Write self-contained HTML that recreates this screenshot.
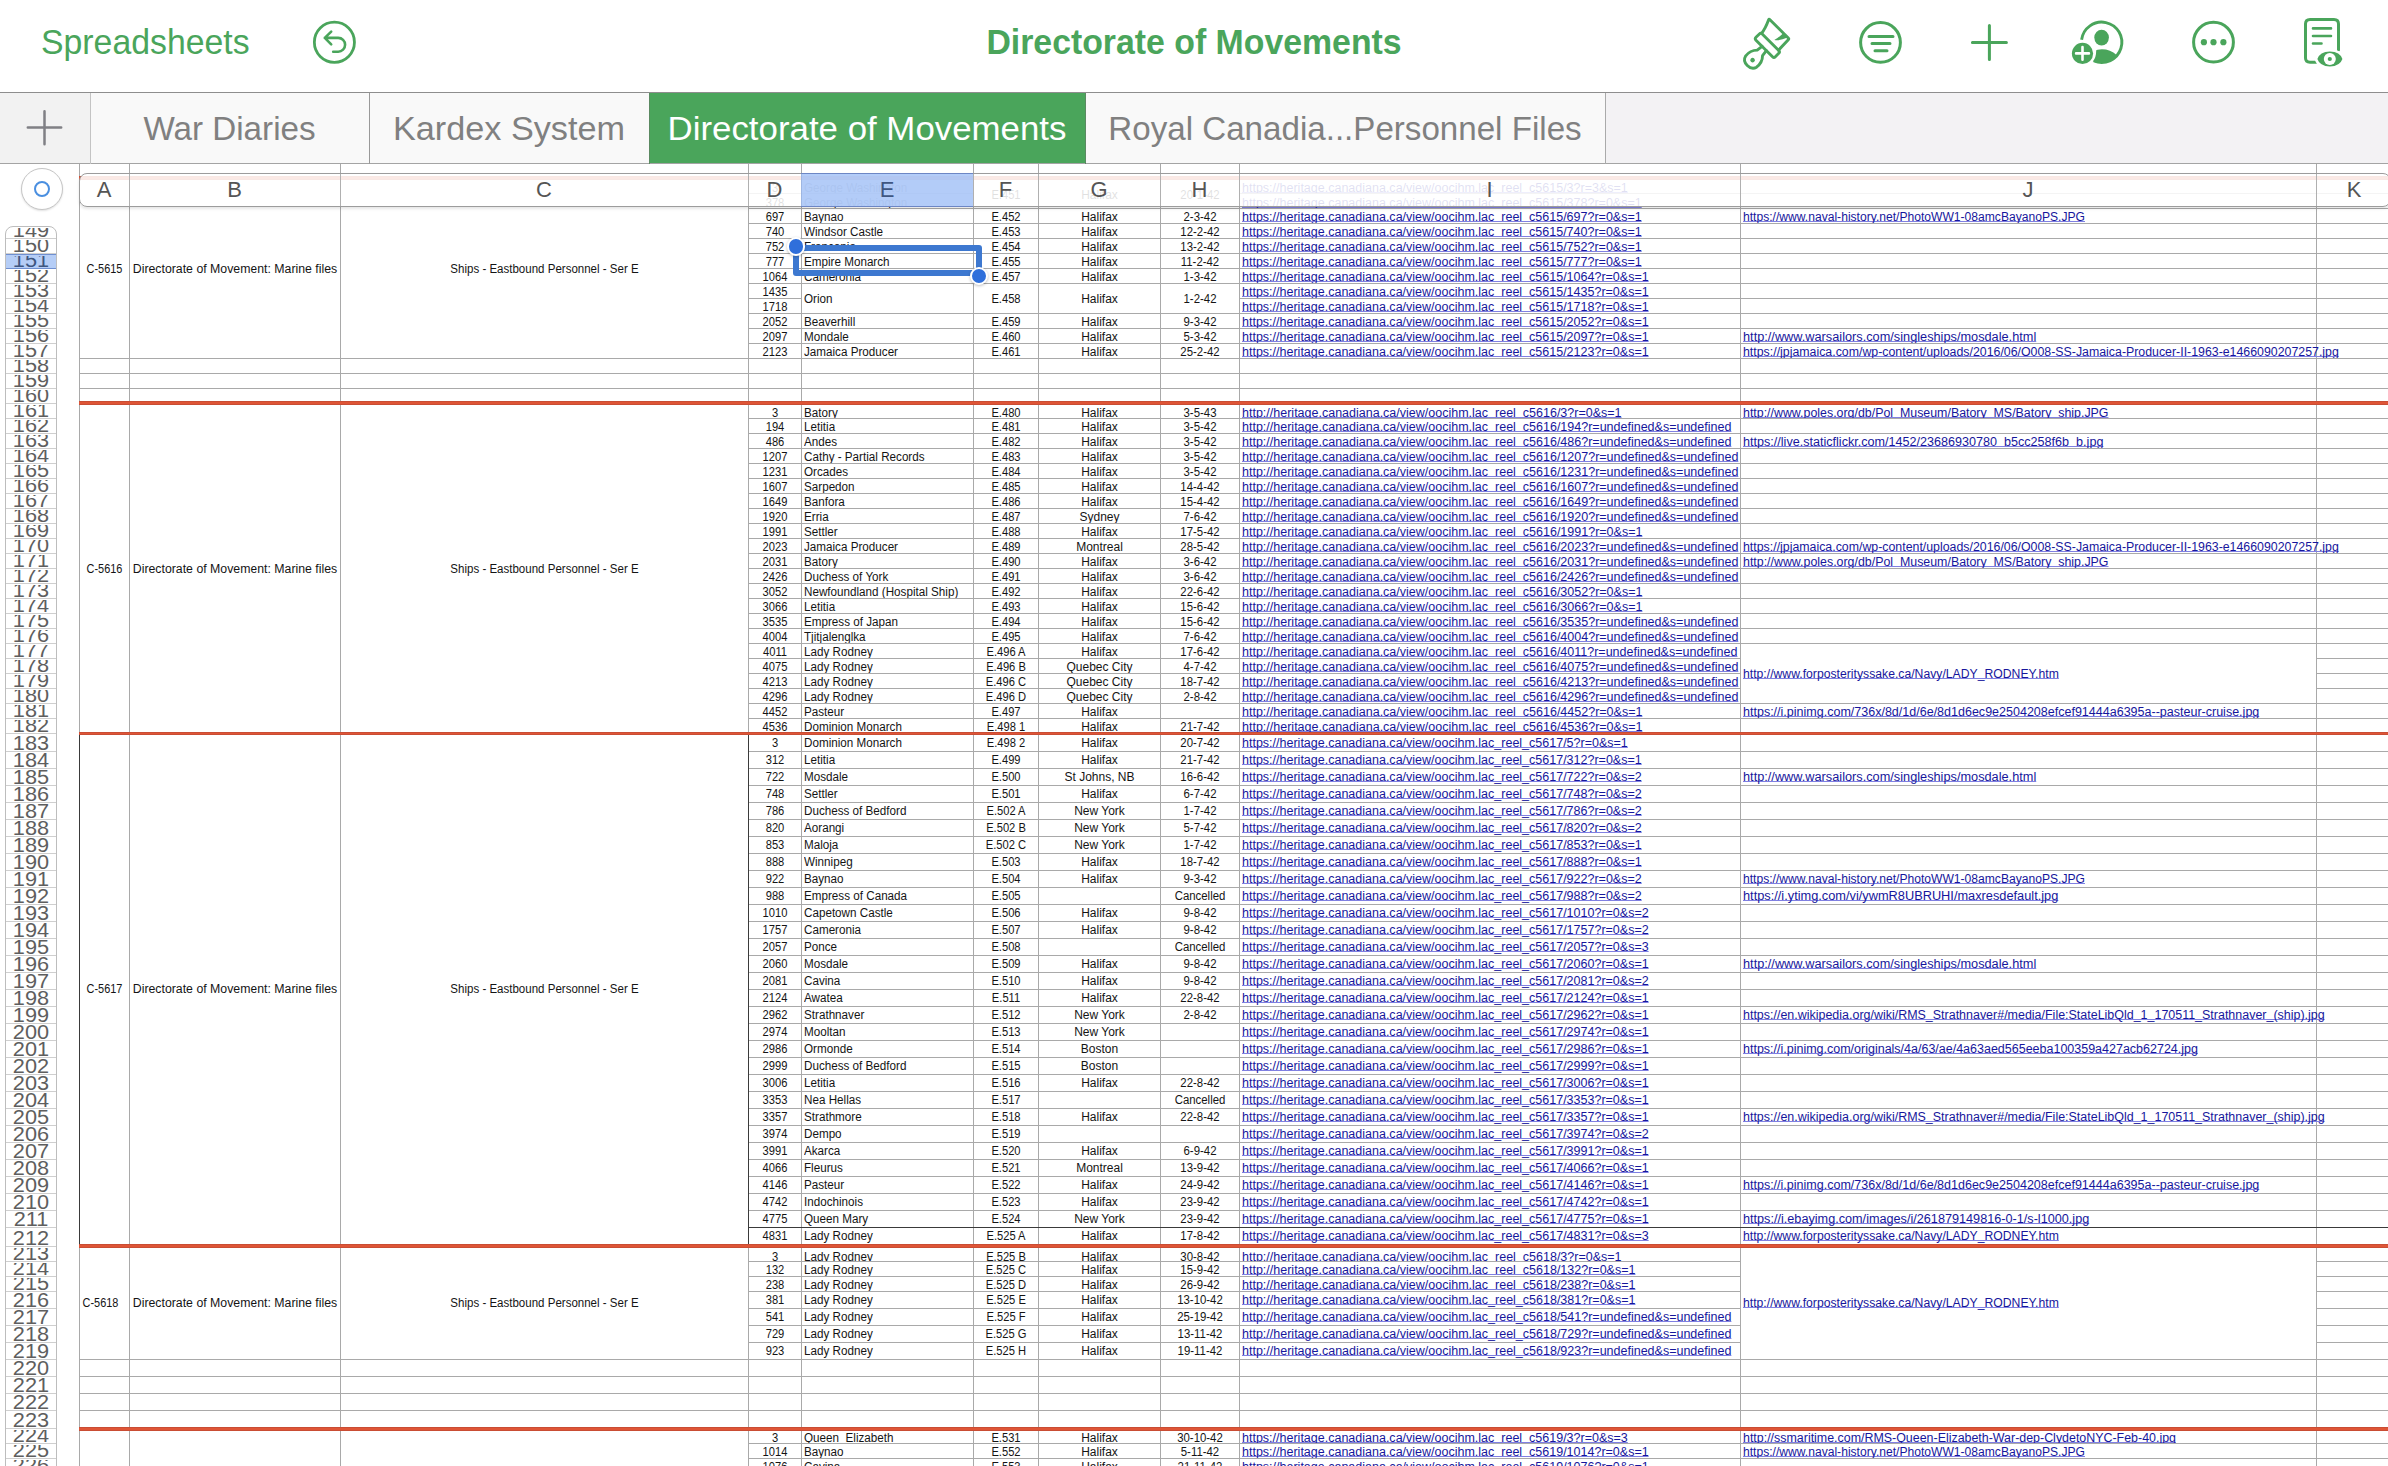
<!DOCTYPE html>
<html><head><meta charset="utf-8"><title>Directorate of Movements</title>
<style>
*{box-sizing:content-box}
html,body{margin:0;padding:0;background:#fff}
body{width:2388px;height:1466px;overflow:hidden;position:relative;font-family:"Liberation Sans",sans-serif}
#grid{position:absolute;left:0;top:0;width:2388px;height:1466px;overflow:hidden}
.c{position:absolute;border:1px solid #a9a9a9}
.tc{position:absolute;overflow:hidden}
.tl{position:absolute;white-space:pre;font-size:12px;line-height:14px;color:#141414;transform-origin:0 0}
.tcn{position:absolute;left:-50px;right:-50px;text-align:center;white-space:pre;font-size:12px;line-height:14px;color:#141414;transform-origin:50% 0}
.u{color:#16169c;text-decoration:underline;text-decoration-color:#8080e2;text-decoration-skip-ink:none;text-underline-offset:0px}
.red{position:absolute;left:79px;width:2400px;height:3.6px;background:#df5536;box-shadow:inset 0 1px 0 rgba(180,70,50,0.5),inset 0 -1px 0 rgba(180,70,50,0.5)}
#colhdr{position:absolute;left:79px;top:173px;width:2310px;height:32px;border:1px solid #9c9c9c;border-radius:8px;background:rgba(255,255,255,0.87);box-shadow:0 2px 3px rgba(0,0,0,0.10)}
.hdiv{position:absolute;top:174px;width:1px;height:32px;background:#b0b0b0}
#ehi{position:absolute;left:801px;top:173px;width:172px;height:32px;background:rgba(150,185,245,0.72);border-top:1px solid #6d86c4;border-bottom:1px solid #6d86c4}
.hl{position:absolute;top:177px;width:60px;text-align:center;font-size:22px;line-height:26px;color:#555}
#rowhdr{position:absolute;left:5px;top:226px;width:50px;height:1300px;border:1px solid #bdbdbd;border-radius:8px 8px 0 0;background:#fff;overflow:hidden}
.rh{position:absolute;left:0;width:50px;border-bottom:1px solid #cfcfcf;box-sizing:border-box;overflow:hidden}
.rc{position:absolute;left:0;right:0;top:1px;bottom:0;overflow:hidden}
.rh span{position:absolute;left:-10px;right:-10px;text-align:center;font-size:20.5px;line-height:24px;color:#5e5e5e;transform:scaleX(1.06)}
.rh.sel{background:#b5cdf6;border-top:1px solid #6f8fd0;border-bottom:1px solid #6f8fd0}
.rh.sel span{color:#3e5680}
#selall{position:absolute;left:21px;top:168px;width:40px;height:40px;border-radius:50%;background:#fff;border:1px solid #c6c6c6;box-shadow:0 1px 2px rgba(0,0,0,0.12)}
#selall div{position:absolute;left:11.8px;top:11.8px;width:12.6px;height:12.6px;border-radius:50%;border:2.6px solid #4a8fe0}
#toolbar{position:absolute;left:0;top:0;width:2388px;height:92px;background:#fff}
#sp{position:absolute;left:41px;top:22px;font-size:35px;line-height:40px;color:#4aa55b;transform:scaleX(0.966);transform-origin:0 0;white-space:pre}
#title{position:absolute;left:889px;width:610px;top:22px;text-align:center;font-size:35px;line-height:40px;font-weight:700;color:#4aa55b;transform:scaleX(0.966);white-space:pre}
#tabbar{position:absolute;left:0;top:92px;width:2388px;height:72px;background:#f3f2f4;border-top:1px solid #8e8e8e;border-bottom:1px solid #a4a4a4;box-sizing:border-box}
.tab{position:absolute;top:0;height:70px}
.tab span{position:absolute;left:-50px;right:-50px;top:17px;text-align:center;font-size:33px;line-height:38px;white-space:pre}
#selbox{position:absolute;left:793px;top:245px;width:177px;height:19px;border:6px solid #3d78d0;border-radius:3px}
.handle{position:absolute;width:14.2px;height:14.2px;border-radius:50%;background:#2f6fdb;border:2.5px solid #fff;box-shadow:0 1px 3px rgba(0,0,0,0.25)}
</style></head>
<body>
<div id="grid">
<div class="c" style="left:79px;top:178px;width:49px;height:179px"></div>
<div class="c" style="left:129px;top:178px;width:210px;height:179px"></div>
<div class="c" style="left:340px;top:178px;width:407px;height:179px"></div>
<div class="c" style="left:748px;top:178px;width:52px;height:14px"></div>
<div class="c" style="left:801px;top:178px;width:171px;height:14px"></div>
<div class="c" style="left:973px;top:178px;width:64px;height:29px"></div>
<div class="c" style="left:1038px;top:178px;width:121px;height:29px"></div>
<div class="c" style="left:1160px;top:178px;width:78px;height:29px"></div>
<div class="c" style="left:1239px;top:178px;width:500px;height:14px"></div>
<div class="c" style="left:1740px;top:178px;width:575px;height:14px"></div>
<div class="c" style="left:748px;top:193px;width:52px;height:14px"></div>
<div class="c" style="left:801px;top:193px;width:171px;height:14px"></div>
<div class="c" style="left:1239px;top:193px;width:500px;height:14px"></div>
<div class="c" style="left:1740px;top:193px;width:575px;height:14px"></div>
<div class="c" style="left:748px;top:208px;width:52px;height:14px"></div>
<div class="c" style="left:801px;top:208px;width:171px;height:14px"></div>
<div class="c" style="left:973px;top:208px;width:64px;height:14px"></div>
<div class="c" style="left:1038px;top:208px;width:121px;height:14px"></div>
<div class="c" style="left:1160px;top:208px;width:78px;height:14px"></div>
<div class="c" style="left:1239px;top:208px;width:500px;height:14px"></div>
<div class="c" style="left:1740px;top:208px;width:575px;height:14px"></div>
<div class="c" style="left:748px;top:223px;width:52px;height:14px"></div>
<div class="c" style="left:801px;top:223px;width:171px;height:14px"></div>
<div class="c" style="left:973px;top:223px;width:64px;height:14px"></div>
<div class="c" style="left:1038px;top:223px;width:121px;height:14px"></div>
<div class="c" style="left:1160px;top:223px;width:78px;height:14px"></div>
<div class="c" style="left:1239px;top:223px;width:500px;height:14px"></div>
<div class="c" style="left:1740px;top:223px;width:575px;height:14px"></div>
<div class="c" style="left:748px;top:238px;width:52px;height:14px"></div>
<div class="c" style="left:801px;top:238px;width:171px;height:14px"></div>
<div class="c" style="left:973px;top:238px;width:64px;height:14px"></div>
<div class="c" style="left:1038px;top:238px;width:121px;height:14px"></div>
<div class="c" style="left:1160px;top:238px;width:78px;height:14px"></div>
<div class="c" style="left:1239px;top:238px;width:500px;height:14px"></div>
<div class="c" style="left:1740px;top:238px;width:575px;height:14px"></div>
<div class="c" style="left:748px;top:253px;width:52px;height:14px"></div>
<div class="c" style="left:801px;top:253px;width:171px;height:14px"></div>
<div class="c" style="left:973px;top:253px;width:64px;height:14px"></div>
<div class="c" style="left:1038px;top:253px;width:121px;height:14px"></div>
<div class="c" style="left:1160px;top:253px;width:78px;height:14px"></div>
<div class="c" style="left:1239px;top:253px;width:500px;height:14px"></div>
<div class="c" style="left:1740px;top:253px;width:575px;height:14px"></div>
<div class="c" style="left:748px;top:268px;width:52px;height:14px"></div>
<div class="c" style="left:801px;top:268px;width:171px;height:14px"></div>
<div class="c" style="left:973px;top:268px;width:64px;height:14px"></div>
<div class="c" style="left:1038px;top:268px;width:121px;height:14px"></div>
<div class="c" style="left:1160px;top:268px;width:78px;height:14px"></div>
<div class="c" style="left:1239px;top:268px;width:500px;height:14px"></div>
<div class="c" style="left:1740px;top:268px;width:575px;height:14px"></div>
<div class="c" style="left:748px;top:313px;width:52px;height:14px"></div>
<div class="c" style="left:801px;top:313px;width:171px;height:14px"></div>
<div class="c" style="left:973px;top:313px;width:64px;height:14px"></div>
<div class="c" style="left:1038px;top:313px;width:121px;height:14px"></div>
<div class="c" style="left:1160px;top:313px;width:78px;height:14px"></div>
<div class="c" style="left:1239px;top:313px;width:500px;height:14px"></div>
<div class="c" style="left:1740px;top:313px;width:575px;height:14px"></div>
<div class="c" style="left:748px;top:328px;width:52px;height:14px"></div>
<div class="c" style="left:801px;top:328px;width:171px;height:14px"></div>
<div class="c" style="left:973px;top:328px;width:64px;height:14px"></div>
<div class="c" style="left:1038px;top:328px;width:121px;height:14px"></div>
<div class="c" style="left:1160px;top:328px;width:78px;height:14px"></div>
<div class="c" style="left:1239px;top:328px;width:500px;height:14px"></div>
<div class="c" style="left:1740px;top:328px;width:575px;height:14px"></div>
<div class="c" style="left:748px;top:343px;width:52px;height:14px"></div>
<div class="c" style="left:801px;top:343px;width:171px;height:14px"></div>
<div class="c" style="left:973px;top:343px;width:64px;height:14px"></div>
<div class="c" style="left:1038px;top:343px;width:121px;height:14px"></div>
<div class="c" style="left:1160px;top:343px;width:78px;height:14px"></div>
<div class="c" style="left:1239px;top:343px;width:500px;height:14px"></div>
<div class="c" style="left:1740px;top:343px;width:575px;height:14px"></div>
<div class="c" style="left:748px;top:283px;width:52px;height:14px"></div>
<div class="c" style="left:748px;top:298px;width:52px;height:14px"></div>
<div class="c" style="left:801px;top:283px;width:171px;height:29px"></div>
<div class="c" style="left:973px;top:283px;width:64px;height:29px"></div>
<div class="c" style="left:1038px;top:283px;width:121px;height:29px"></div>
<div class="c" style="left:1160px;top:283px;width:78px;height:29px"></div>
<div class="c" style="left:1239px;top:283px;width:500px;height:14px"></div>
<div class="c" style="left:1239px;top:298px;width:500px;height:14px"></div>
<div class="c" style="left:1740px;top:283px;width:575px;height:14px"></div>
<div class="c" style="left:1740px;top:298px;width:575px;height:14px"></div>
<div class="c" style="left:79px;top:403px;width:49px;height:329px"></div>
<div class="c" style="left:129px;top:403px;width:210px;height:329px"></div>
<div class="c" style="left:340px;top:403px;width:407px;height:329px"></div>
<div class="c" style="left:748px;top:403px;width:52px;height:14px"></div>
<div class="c" style="left:801px;top:403px;width:171px;height:14px"></div>
<div class="c" style="left:973px;top:403px;width:64px;height:14px"></div>
<div class="c" style="left:1038px;top:403px;width:121px;height:14px"></div>
<div class="c" style="left:1160px;top:403px;width:78px;height:14px"></div>
<div class="c" style="left:1239px;top:403px;width:500px;height:14px"></div>
<div class="c" style="left:1740px;top:403px;width:575px;height:14px"></div>
<div class="c" style="left:748px;top:418px;width:52px;height:14px"></div>
<div class="c" style="left:801px;top:418px;width:171px;height:14px"></div>
<div class="c" style="left:973px;top:418px;width:64px;height:14px"></div>
<div class="c" style="left:1038px;top:418px;width:121px;height:14px"></div>
<div class="c" style="left:1160px;top:418px;width:78px;height:14px"></div>
<div class="c" style="left:1239px;top:418px;width:500px;height:14px"></div>
<div class="c" style="left:1740px;top:418px;width:575px;height:14px"></div>
<div class="c" style="left:748px;top:433px;width:52px;height:14px"></div>
<div class="c" style="left:801px;top:433px;width:171px;height:14px"></div>
<div class="c" style="left:973px;top:433px;width:64px;height:14px"></div>
<div class="c" style="left:1038px;top:433px;width:121px;height:14px"></div>
<div class="c" style="left:1160px;top:433px;width:78px;height:14px"></div>
<div class="c" style="left:1239px;top:433px;width:500px;height:14px"></div>
<div class="c" style="left:1740px;top:433px;width:575px;height:14px"></div>
<div class="c" style="left:748px;top:448px;width:52px;height:14px"></div>
<div class="c" style="left:801px;top:448px;width:171px;height:14px"></div>
<div class="c" style="left:973px;top:448px;width:64px;height:14px"></div>
<div class="c" style="left:1038px;top:448px;width:121px;height:14px"></div>
<div class="c" style="left:1160px;top:448px;width:78px;height:14px"></div>
<div class="c" style="left:1239px;top:448px;width:500px;height:14px"></div>
<div class="c" style="left:1740px;top:448px;width:575px;height:14px"></div>
<div class="c" style="left:748px;top:463px;width:52px;height:14px"></div>
<div class="c" style="left:801px;top:463px;width:171px;height:14px"></div>
<div class="c" style="left:973px;top:463px;width:64px;height:14px"></div>
<div class="c" style="left:1038px;top:463px;width:121px;height:14px"></div>
<div class="c" style="left:1160px;top:463px;width:78px;height:14px"></div>
<div class="c" style="left:1239px;top:463px;width:500px;height:14px"></div>
<div class="c" style="left:1740px;top:463px;width:575px;height:14px"></div>
<div class="c" style="left:748px;top:478px;width:52px;height:14px"></div>
<div class="c" style="left:801px;top:478px;width:171px;height:14px"></div>
<div class="c" style="left:973px;top:478px;width:64px;height:14px"></div>
<div class="c" style="left:1038px;top:478px;width:121px;height:14px"></div>
<div class="c" style="left:1160px;top:478px;width:78px;height:14px"></div>
<div class="c" style="left:1239px;top:478px;width:500px;height:14px"></div>
<div class="c" style="left:1740px;top:478px;width:575px;height:14px"></div>
<div class="c" style="left:748px;top:493px;width:52px;height:14px"></div>
<div class="c" style="left:801px;top:493px;width:171px;height:14px"></div>
<div class="c" style="left:973px;top:493px;width:64px;height:14px"></div>
<div class="c" style="left:1038px;top:493px;width:121px;height:14px"></div>
<div class="c" style="left:1160px;top:493px;width:78px;height:14px"></div>
<div class="c" style="left:1239px;top:493px;width:500px;height:14px"></div>
<div class="c" style="left:1740px;top:493px;width:575px;height:14px"></div>
<div class="c" style="left:748px;top:508px;width:52px;height:14px"></div>
<div class="c" style="left:801px;top:508px;width:171px;height:14px"></div>
<div class="c" style="left:973px;top:508px;width:64px;height:14px"></div>
<div class="c" style="left:1038px;top:508px;width:121px;height:14px"></div>
<div class="c" style="left:1160px;top:508px;width:78px;height:14px"></div>
<div class="c" style="left:1239px;top:508px;width:500px;height:14px"></div>
<div class="c" style="left:1740px;top:508px;width:575px;height:14px"></div>
<div class="c" style="left:748px;top:523px;width:52px;height:14px"></div>
<div class="c" style="left:801px;top:523px;width:171px;height:14px"></div>
<div class="c" style="left:973px;top:523px;width:64px;height:14px"></div>
<div class="c" style="left:1038px;top:523px;width:121px;height:14px"></div>
<div class="c" style="left:1160px;top:523px;width:78px;height:14px"></div>
<div class="c" style="left:1239px;top:523px;width:500px;height:14px"></div>
<div class="c" style="left:1740px;top:523px;width:575px;height:14px"></div>
<div class="c" style="left:748px;top:538px;width:52px;height:14px"></div>
<div class="c" style="left:801px;top:538px;width:171px;height:14px"></div>
<div class="c" style="left:973px;top:538px;width:64px;height:14px"></div>
<div class="c" style="left:1038px;top:538px;width:121px;height:14px"></div>
<div class="c" style="left:1160px;top:538px;width:78px;height:14px"></div>
<div class="c" style="left:1239px;top:538px;width:500px;height:14px"></div>
<div class="c" style="left:1740px;top:538px;width:575px;height:14px"></div>
<div class="c" style="left:748px;top:553px;width:52px;height:14px"></div>
<div class="c" style="left:801px;top:553px;width:171px;height:14px"></div>
<div class="c" style="left:973px;top:553px;width:64px;height:14px"></div>
<div class="c" style="left:1038px;top:553px;width:121px;height:14px"></div>
<div class="c" style="left:1160px;top:553px;width:78px;height:14px"></div>
<div class="c" style="left:1239px;top:553px;width:500px;height:14px"></div>
<div class="c" style="left:1740px;top:553px;width:575px;height:14px"></div>
<div class="c" style="left:748px;top:568px;width:52px;height:14px"></div>
<div class="c" style="left:801px;top:568px;width:171px;height:14px"></div>
<div class="c" style="left:973px;top:568px;width:64px;height:14px"></div>
<div class="c" style="left:1038px;top:568px;width:121px;height:14px"></div>
<div class="c" style="left:1160px;top:568px;width:78px;height:14px"></div>
<div class="c" style="left:1239px;top:568px;width:500px;height:14px"></div>
<div class="c" style="left:1740px;top:568px;width:575px;height:14px"></div>
<div class="c" style="left:748px;top:583px;width:52px;height:14px"></div>
<div class="c" style="left:801px;top:583px;width:171px;height:14px"></div>
<div class="c" style="left:973px;top:583px;width:64px;height:14px"></div>
<div class="c" style="left:1038px;top:583px;width:121px;height:14px"></div>
<div class="c" style="left:1160px;top:583px;width:78px;height:14px"></div>
<div class="c" style="left:1239px;top:583px;width:500px;height:14px"></div>
<div class="c" style="left:1740px;top:583px;width:575px;height:14px"></div>
<div class="c" style="left:748px;top:598px;width:52px;height:14px"></div>
<div class="c" style="left:801px;top:598px;width:171px;height:14px"></div>
<div class="c" style="left:973px;top:598px;width:64px;height:14px"></div>
<div class="c" style="left:1038px;top:598px;width:121px;height:14px"></div>
<div class="c" style="left:1160px;top:598px;width:78px;height:14px"></div>
<div class="c" style="left:1239px;top:598px;width:500px;height:14px"></div>
<div class="c" style="left:1740px;top:598px;width:575px;height:14px"></div>
<div class="c" style="left:748px;top:613px;width:52px;height:14px"></div>
<div class="c" style="left:801px;top:613px;width:171px;height:14px"></div>
<div class="c" style="left:973px;top:613px;width:64px;height:14px"></div>
<div class="c" style="left:1038px;top:613px;width:121px;height:14px"></div>
<div class="c" style="left:1160px;top:613px;width:78px;height:14px"></div>
<div class="c" style="left:1239px;top:613px;width:500px;height:14px"></div>
<div class="c" style="left:1740px;top:613px;width:575px;height:14px"></div>
<div class="c" style="left:748px;top:628px;width:52px;height:14px"></div>
<div class="c" style="left:801px;top:628px;width:171px;height:14px"></div>
<div class="c" style="left:973px;top:628px;width:64px;height:14px"></div>
<div class="c" style="left:1038px;top:628px;width:121px;height:14px"></div>
<div class="c" style="left:1160px;top:628px;width:78px;height:14px"></div>
<div class="c" style="left:1239px;top:628px;width:500px;height:14px"></div>
<div class="c" style="left:1740px;top:628px;width:575px;height:14px"></div>
<div class="c" style="left:748px;top:643px;width:52px;height:14px"></div>
<div class="c" style="left:801px;top:643px;width:171px;height:14px"></div>
<div class="c" style="left:973px;top:643px;width:64px;height:14px"></div>
<div class="c" style="left:1038px;top:643px;width:121px;height:14px"></div>
<div class="c" style="left:1160px;top:643px;width:78px;height:14px"></div>
<div class="c" style="left:1239px;top:643px;width:500px;height:14px"></div>
<div class="c" style="left:748px;top:658px;width:52px;height:14px"></div>
<div class="c" style="left:801px;top:658px;width:171px;height:14px"></div>
<div class="c" style="left:973px;top:658px;width:64px;height:14px"></div>
<div class="c" style="left:1038px;top:658px;width:121px;height:14px"></div>
<div class="c" style="left:1160px;top:658px;width:78px;height:14px"></div>
<div class="c" style="left:1239px;top:658px;width:500px;height:14px"></div>
<div class="c" style="left:748px;top:673px;width:52px;height:14px"></div>
<div class="c" style="left:801px;top:673px;width:171px;height:14px"></div>
<div class="c" style="left:973px;top:673px;width:64px;height:14px"></div>
<div class="c" style="left:1038px;top:673px;width:121px;height:14px"></div>
<div class="c" style="left:1160px;top:673px;width:78px;height:14px"></div>
<div class="c" style="left:1239px;top:673px;width:500px;height:14px"></div>
<div class="c" style="left:748px;top:688px;width:52px;height:14px"></div>
<div class="c" style="left:801px;top:688px;width:171px;height:14px"></div>
<div class="c" style="left:973px;top:688px;width:64px;height:14px"></div>
<div class="c" style="left:1038px;top:688px;width:121px;height:14px"></div>
<div class="c" style="left:1160px;top:688px;width:78px;height:14px"></div>
<div class="c" style="left:1239px;top:688px;width:500px;height:14px"></div>
<div class="c" style="left:748px;top:703px;width:52px;height:14px"></div>
<div class="c" style="left:801px;top:703px;width:171px;height:14px"></div>
<div class="c" style="left:973px;top:703px;width:64px;height:14px"></div>
<div class="c" style="left:1038px;top:703px;width:121px;height:14px"></div>
<div class="c" style="left:1160px;top:703px;width:78px;height:14px"></div>
<div class="c" style="left:1239px;top:703px;width:500px;height:14px"></div>
<div class="c" style="left:1740px;top:703px;width:575px;height:14px"></div>
<div class="c" style="left:748px;top:718px;width:52px;height:14px"></div>
<div class="c" style="left:801px;top:718px;width:171px;height:14px"></div>
<div class="c" style="left:973px;top:718px;width:64px;height:14px"></div>
<div class="c" style="left:1038px;top:718px;width:121px;height:14px"></div>
<div class="c" style="left:1160px;top:718px;width:78px;height:14px"></div>
<div class="c" style="left:1239px;top:718px;width:500px;height:14px"></div>
<div class="c" style="left:1740px;top:718px;width:575px;height:14px"></div>
<div class="c" style="left:1740px;top:643px;width:575px;height:59px"></div>
<div class="c" style="left:79px;top:733px;width:49px;height:510px"></div>
<div class="c" style="left:129px;top:733px;width:210px;height:510px"></div>
<div class="c" style="left:340px;top:733px;width:407px;height:510px"></div>
<div class="c" style="left:748px;top:733px;width:52px;height:17px"></div>
<div class="c" style="left:801px;top:733px;width:171px;height:17px"></div>
<div class="c" style="left:973px;top:733px;width:64px;height:17px"></div>
<div class="c" style="left:1038px;top:733px;width:121px;height:17px"></div>
<div class="c" style="left:1160px;top:733px;width:78px;height:17px"></div>
<div class="c" style="left:1239px;top:733px;width:500px;height:17px"></div>
<div class="c" style="left:1740px;top:733px;width:575px;height:17px"></div>
<div class="c" style="left:748px;top:751px;width:52px;height:16px"></div>
<div class="c" style="left:801px;top:751px;width:171px;height:16px"></div>
<div class="c" style="left:973px;top:751px;width:64px;height:16px"></div>
<div class="c" style="left:1038px;top:751px;width:121px;height:16px"></div>
<div class="c" style="left:1160px;top:751px;width:78px;height:16px"></div>
<div class="c" style="left:1239px;top:751px;width:500px;height:16px"></div>
<div class="c" style="left:1740px;top:751px;width:575px;height:16px"></div>
<div class="c" style="left:748px;top:768px;width:52px;height:16px"></div>
<div class="c" style="left:801px;top:768px;width:171px;height:16px"></div>
<div class="c" style="left:973px;top:768px;width:64px;height:16px"></div>
<div class="c" style="left:1038px;top:768px;width:121px;height:16px"></div>
<div class="c" style="left:1160px;top:768px;width:78px;height:16px"></div>
<div class="c" style="left:1239px;top:768px;width:500px;height:16px"></div>
<div class="c" style="left:1740px;top:768px;width:575px;height:16px"></div>
<div class="c" style="left:748px;top:785px;width:52px;height:16px"></div>
<div class="c" style="left:801px;top:785px;width:171px;height:16px"></div>
<div class="c" style="left:973px;top:785px;width:64px;height:16px"></div>
<div class="c" style="left:1038px;top:785px;width:121px;height:16px"></div>
<div class="c" style="left:1160px;top:785px;width:78px;height:16px"></div>
<div class="c" style="left:1239px;top:785px;width:500px;height:16px"></div>
<div class="c" style="left:1740px;top:785px;width:575px;height:16px"></div>
<div class="c" style="left:748px;top:802px;width:52px;height:16px"></div>
<div class="c" style="left:801px;top:802px;width:171px;height:16px"></div>
<div class="c" style="left:973px;top:802px;width:64px;height:16px"></div>
<div class="c" style="left:1038px;top:802px;width:121px;height:16px"></div>
<div class="c" style="left:1160px;top:802px;width:78px;height:16px"></div>
<div class="c" style="left:1239px;top:802px;width:500px;height:16px"></div>
<div class="c" style="left:1740px;top:802px;width:575px;height:16px"></div>
<div class="c" style="left:748px;top:819px;width:52px;height:16px"></div>
<div class="c" style="left:801px;top:819px;width:171px;height:16px"></div>
<div class="c" style="left:973px;top:819px;width:64px;height:16px"></div>
<div class="c" style="left:1038px;top:819px;width:121px;height:16px"></div>
<div class="c" style="left:1160px;top:819px;width:78px;height:16px"></div>
<div class="c" style="left:1239px;top:819px;width:500px;height:16px"></div>
<div class="c" style="left:1740px;top:819px;width:575px;height:16px"></div>
<div class="c" style="left:748px;top:836px;width:52px;height:16px"></div>
<div class="c" style="left:801px;top:836px;width:171px;height:16px"></div>
<div class="c" style="left:973px;top:836px;width:64px;height:16px"></div>
<div class="c" style="left:1038px;top:836px;width:121px;height:16px"></div>
<div class="c" style="left:1160px;top:836px;width:78px;height:16px"></div>
<div class="c" style="left:1239px;top:836px;width:500px;height:16px"></div>
<div class="c" style="left:1740px;top:836px;width:575px;height:16px"></div>
<div class="c" style="left:748px;top:853px;width:52px;height:16px"></div>
<div class="c" style="left:801px;top:853px;width:171px;height:16px"></div>
<div class="c" style="left:973px;top:853px;width:64px;height:16px"></div>
<div class="c" style="left:1038px;top:853px;width:121px;height:16px"></div>
<div class="c" style="left:1160px;top:853px;width:78px;height:16px"></div>
<div class="c" style="left:1239px;top:853px;width:500px;height:16px"></div>
<div class="c" style="left:1740px;top:853px;width:575px;height:16px"></div>
<div class="c" style="left:748px;top:870px;width:52px;height:16px"></div>
<div class="c" style="left:801px;top:870px;width:171px;height:16px"></div>
<div class="c" style="left:973px;top:870px;width:64px;height:16px"></div>
<div class="c" style="left:1038px;top:870px;width:121px;height:16px"></div>
<div class="c" style="left:1160px;top:870px;width:78px;height:16px"></div>
<div class="c" style="left:1239px;top:870px;width:500px;height:16px"></div>
<div class="c" style="left:1740px;top:870px;width:575px;height:16px"></div>
<div class="c" style="left:748px;top:887px;width:52px;height:16px"></div>
<div class="c" style="left:801px;top:887px;width:171px;height:16px"></div>
<div class="c" style="left:973px;top:887px;width:64px;height:16px"></div>
<div class="c" style="left:1038px;top:887px;width:121px;height:16px"></div>
<div class="c" style="left:1160px;top:887px;width:78px;height:16px"></div>
<div class="c" style="left:1239px;top:887px;width:500px;height:16px"></div>
<div class="c" style="left:1740px;top:887px;width:575px;height:16px"></div>
<div class="c" style="left:748px;top:904px;width:52px;height:16px"></div>
<div class="c" style="left:801px;top:904px;width:171px;height:16px"></div>
<div class="c" style="left:973px;top:904px;width:64px;height:16px"></div>
<div class="c" style="left:1038px;top:904px;width:121px;height:16px"></div>
<div class="c" style="left:1160px;top:904px;width:78px;height:16px"></div>
<div class="c" style="left:1239px;top:904px;width:500px;height:16px"></div>
<div class="c" style="left:1740px;top:904px;width:575px;height:16px"></div>
<div class="c" style="left:748px;top:921px;width:52px;height:16px"></div>
<div class="c" style="left:801px;top:921px;width:171px;height:16px"></div>
<div class="c" style="left:973px;top:921px;width:64px;height:16px"></div>
<div class="c" style="left:1038px;top:921px;width:121px;height:16px"></div>
<div class="c" style="left:1160px;top:921px;width:78px;height:16px"></div>
<div class="c" style="left:1239px;top:921px;width:500px;height:16px"></div>
<div class="c" style="left:1740px;top:921px;width:575px;height:16px"></div>
<div class="c" style="left:748px;top:938px;width:52px;height:16px"></div>
<div class="c" style="left:801px;top:938px;width:171px;height:16px"></div>
<div class="c" style="left:973px;top:938px;width:64px;height:16px"></div>
<div class="c" style="left:1038px;top:938px;width:121px;height:16px"></div>
<div class="c" style="left:1160px;top:938px;width:78px;height:16px"></div>
<div class="c" style="left:1239px;top:938px;width:500px;height:16px"></div>
<div class="c" style="left:1740px;top:938px;width:575px;height:16px"></div>
<div class="c" style="left:748px;top:955px;width:52px;height:16px"></div>
<div class="c" style="left:801px;top:955px;width:171px;height:16px"></div>
<div class="c" style="left:973px;top:955px;width:64px;height:16px"></div>
<div class="c" style="left:1038px;top:955px;width:121px;height:16px"></div>
<div class="c" style="left:1160px;top:955px;width:78px;height:16px"></div>
<div class="c" style="left:1239px;top:955px;width:500px;height:16px"></div>
<div class="c" style="left:1740px;top:955px;width:575px;height:16px"></div>
<div class="c" style="left:748px;top:972px;width:52px;height:16px"></div>
<div class="c" style="left:801px;top:972px;width:171px;height:16px"></div>
<div class="c" style="left:973px;top:972px;width:64px;height:16px"></div>
<div class="c" style="left:1038px;top:972px;width:121px;height:16px"></div>
<div class="c" style="left:1160px;top:972px;width:78px;height:16px"></div>
<div class="c" style="left:1239px;top:972px;width:500px;height:16px"></div>
<div class="c" style="left:1740px;top:972px;width:575px;height:16px"></div>
<div class="c" style="left:748px;top:989px;width:52px;height:16px"></div>
<div class="c" style="left:801px;top:989px;width:171px;height:16px"></div>
<div class="c" style="left:973px;top:989px;width:64px;height:16px"></div>
<div class="c" style="left:1038px;top:989px;width:121px;height:16px"></div>
<div class="c" style="left:1160px;top:989px;width:78px;height:16px"></div>
<div class="c" style="left:1239px;top:989px;width:500px;height:16px"></div>
<div class="c" style="left:1740px;top:989px;width:575px;height:16px"></div>
<div class="c" style="left:748px;top:1006px;width:52px;height:16px"></div>
<div class="c" style="left:801px;top:1006px;width:171px;height:16px"></div>
<div class="c" style="left:973px;top:1006px;width:64px;height:16px"></div>
<div class="c" style="left:1038px;top:1006px;width:121px;height:16px"></div>
<div class="c" style="left:1160px;top:1006px;width:78px;height:16px"></div>
<div class="c" style="left:1239px;top:1006px;width:500px;height:16px"></div>
<div class="c" style="left:1740px;top:1006px;width:575px;height:16px"></div>
<div class="c" style="left:748px;top:1023px;width:52px;height:16px"></div>
<div class="c" style="left:801px;top:1023px;width:171px;height:16px"></div>
<div class="c" style="left:973px;top:1023px;width:64px;height:16px"></div>
<div class="c" style="left:1038px;top:1023px;width:121px;height:16px"></div>
<div class="c" style="left:1160px;top:1023px;width:78px;height:16px"></div>
<div class="c" style="left:1239px;top:1023px;width:500px;height:16px"></div>
<div class="c" style="left:1740px;top:1023px;width:575px;height:16px"></div>
<div class="c" style="left:748px;top:1040px;width:52px;height:16px"></div>
<div class="c" style="left:801px;top:1040px;width:171px;height:16px"></div>
<div class="c" style="left:973px;top:1040px;width:64px;height:16px"></div>
<div class="c" style="left:1038px;top:1040px;width:121px;height:16px"></div>
<div class="c" style="left:1160px;top:1040px;width:78px;height:16px"></div>
<div class="c" style="left:1239px;top:1040px;width:500px;height:16px"></div>
<div class="c" style="left:1740px;top:1040px;width:575px;height:16px"></div>
<div class="c" style="left:748px;top:1057px;width:52px;height:16px"></div>
<div class="c" style="left:801px;top:1057px;width:171px;height:16px"></div>
<div class="c" style="left:973px;top:1057px;width:64px;height:16px"></div>
<div class="c" style="left:1038px;top:1057px;width:121px;height:16px"></div>
<div class="c" style="left:1160px;top:1057px;width:78px;height:16px"></div>
<div class="c" style="left:1239px;top:1057px;width:500px;height:16px"></div>
<div class="c" style="left:1740px;top:1057px;width:575px;height:16px"></div>
<div class="c" style="left:748px;top:1074px;width:52px;height:16px"></div>
<div class="c" style="left:801px;top:1074px;width:171px;height:16px"></div>
<div class="c" style="left:973px;top:1074px;width:64px;height:16px"></div>
<div class="c" style="left:1038px;top:1074px;width:121px;height:16px"></div>
<div class="c" style="left:1160px;top:1074px;width:78px;height:16px"></div>
<div class="c" style="left:1239px;top:1074px;width:500px;height:16px"></div>
<div class="c" style="left:1740px;top:1074px;width:575px;height:16px"></div>
<div class="c" style="left:748px;top:1091px;width:52px;height:16px"></div>
<div class="c" style="left:801px;top:1091px;width:171px;height:16px"></div>
<div class="c" style="left:973px;top:1091px;width:64px;height:16px"></div>
<div class="c" style="left:1038px;top:1091px;width:121px;height:16px"></div>
<div class="c" style="left:1160px;top:1091px;width:78px;height:16px"></div>
<div class="c" style="left:1239px;top:1091px;width:500px;height:16px"></div>
<div class="c" style="left:1740px;top:1091px;width:575px;height:16px"></div>
<div class="c" style="left:748px;top:1108px;width:52px;height:16px"></div>
<div class="c" style="left:801px;top:1108px;width:171px;height:16px"></div>
<div class="c" style="left:973px;top:1108px;width:64px;height:16px"></div>
<div class="c" style="left:1038px;top:1108px;width:121px;height:16px"></div>
<div class="c" style="left:1160px;top:1108px;width:78px;height:16px"></div>
<div class="c" style="left:1239px;top:1108px;width:500px;height:16px"></div>
<div class="c" style="left:1740px;top:1108px;width:575px;height:16px"></div>
<div class="c" style="left:748px;top:1125px;width:52px;height:16px"></div>
<div class="c" style="left:801px;top:1125px;width:171px;height:16px"></div>
<div class="c" style="left:973px;top:1125px;width:64px;height:16px"></div>
<div class="c" style="left:1038px;top:1125px;width:121px;height:16px"></div>
<div class="c" style="left:1160px;top:1125px;width:78px;height:16px"></div>
<div class="c" style="left:1239px;top:1125px;width:500px;height:16px"></div>
<div class="c" style="left:1740px;top:1125px;width:575px;height:16px"></div>
<div class="c" style="left:748px;top:1142px;width:52px;height:16px"></div>
<div class="c" style="left:801px;top:1142px;width:171px;height:16px"></div>
<div class="c" style="left:973px;top:1142px;width:64px;height:16px"></div>
<div class="c" style="left:1038px;top:1142px;width:121px;height:16px"></div>
<div class="c" style="left:1160px;top:1142px;width:78px;height:16px"></div>
<div class="c" style="left:1239px;top:1142px;width:500px;height:16px"></div>
<div class="c" style="left:1740px;top:1142px;width:575px;height:16px"></div>
<div class="c" style="left:748px;top:1159px;width:52px;height:16px"></div>
<div class="c" style="left:801px;top:1159px;width:171px;height:16px"></div>
<div class="c" style="left:973px;top:1159px;width:64px;height:16px"></div>
<div class="c" style="left:1038px;top:1159px;width:121px;height:16px"></div>
<div class="c" style="left:1160px;top:1159px;width:78px;height:16px"></div>
<div class="c" style="left:1239px;top:1159px;width:500px;height:16px"></div>
<div class="c" style="left:1740px;top:1159px;width:575px;height:16px"></div>
<div class="c" style="left:748px;top:1176px;width:52px;height:16px"></div>
<div class="c" style="left:801px;top:1176px;width:171px;height:16px"></div>
<div class="c" style="left:973px;top:1176px;width:64px;height:16px"></div>
<div class="c" style="left:1038px;top:1176px;width:121px;height:16px"></div>
<div class="c" style="left:1160px;top:1176px;width:78px;height:16px"></div>
<div class="c" style="left:1239px;top:1176px;width:500px;height:16px"></div>
<div class="c" style="left:1740px;top:1176px;width:575px;height:16px"></div>
<div class="c" style="left:748px;top:1193px;width:52px;height:16px"></div>
<div class="c" style="left:801px;top:1193px;width:171px;height:16px"></div>
<div class="c" style="left:973px;top:1193px;width:64px;height:16px"></div>
<div class="c" style="left:1038px;top:1193px;width:121px;height:16px"></div>
<div class="c" style="left:1160px;top:1193px;width:78px;height:16px"></div>
<div class="c" style="left:1239px;top:1193px;width:500px;height:16px"></div>
<div class="c" style="left:1740px;top:1193px;width:575px;height:16px"></div>
<div class="c" style="left:748px;top:1210px;width:52px;height:16px"></div>
<div class="c" style="left:801px;top:1210px;width:171px;height:16px"></div>
<div class="c" style="left:973px;top:1210px;width:64px;height:16px"></div>
<div class="c" style="left:1038px;top:1210px;width:121px;height:16px"></div>
<div class="c" style="left:1160px;top:1210px;width:78px;height:16px"></div>
<div class="c" style="left:1239px;top:1210px;width:500px;height:16px"></div>
<div class="c" style="left:1740px;top:1210px;width:575px;height:16px"></div>
<div class="c" style="left:748px;top:1227px;width:52px;height:16px"></div>
<div class="c" style="left:801px;top:1227px;width:171px;height:16px"></div>
<div class="c" style="left:973px;top:1227px;width:64px;height:16px"></div>
<div class="c" style="left:1038px;top:1227px;width:121px;height:16px"></div>
<div class="c" style="left:1160px;top:1227px;width:78px;height:16px"></div>
<div class="c" style="left:1239px;top:1227px;width:500px;height:16px"></div>
<div class="c" style="left:1740px;top:1227px;width:575px;height:16px"></div>
<div class="c" style="left:79px;top:1246px;width:49px;height:112px"></div>
<div class="c" style="left:129px;top:1246px;width:210px;height:112px"></div>
<div class="c" style="left:340px;top:1246px;width:407px;height:112px"></div>
<div class="c" style="left:748px;top:1246px;width:52px;height:14px"></div>
<div class="c" style="left:801px;top:1246px;width:171px;height:14px"></div>
<div class="c" style="left:973px;top:1246px;width:64px;height:14px"></div>
<div class="c" style="left:1038px;top:1246px;width:121px;height:14px"></div>
<div class="c" style="left:1160px;top:1246px;width:78px;height:14px"></div>
<div class="c" style="left:1239px;top:1246px;width:500px;height:14px"></div>
<div class="c" style="left:748px;top:1261px;width:52px;height:14px"></div>
<div class="c" style="left:801px;top:1261px;width:171px;height:14px"></div>
<div class="c" style="left:973px;top:1261px;width:64px;height:14px"></div>
<div class="c" style="left:1038px;top:1261px;width:121px;height:14px"></div>
<div class="c" style="left:1160px;top:1261px;width:78px;height:14px"></div>
<div class="c" style="left:1239px;top:1261px;width:500px;height:14px"></div>
<div class="c" style="left:748px;top:1276px;width:52px;height:14px"></div>
<div class="c" style="left:801px;top:1276px;width:171px;height:14px"></div>
<div class="c" style="left:973px;top:1276px;width:64px;height:14px"></div>
<div class="c" style="left:1038px;top:1276px;width:121px;height:14px"></div>
<div class="c" style="left:1160px;top:1276px;width:78px;height:14px"></div>
<div class="c" style="left:1239px;top:1276px;width:500px;height:14px"></div>
<div class="c" style="left:748px;top:1291px;width:52px;height:16px"></div>
<div class="c" style="left:801px;top:1291px;width:171px;height:16px"></div>
<div class="c" style="left:973px;top:1291px;width:64px;height:16px"></div>
<div class="c" style="left:1038px;top:1291px;width:121px;height:16px"></div>
<div class="c" style="left:1160px;top:1291px;width:78px;height:16px"></div>
<div class="c" style="left:1239px;top:1291px;width:500px;height:16px"></div>
<div class="c" style="left:748px;top:1308px;width:52px;height:16px"></div>
<div class="c" style="left:801px;top:1308px;width:171px;height:16px"></div>
<div class="c" style="left:973px;top:1308px;width:64px;height:16px"></div>
<div class="c" style="left:1038px;top:1308px;width:121px;height:16px"></div>
<div class="c" style="left:1160px;top:1308px;width:78px;height:16px"></div>
<div class="c" style="left:1239px;top:1308px;width:500px;height:16px"></div>
<div class="c" style="left:748px;top:1325px;width:52px;height:16px"></div>
<div class="c" style="left:801px;top:1325px;width:171px;height:16px"></div>
<div class="c" style="left:973px;top:1325px;width:64px;height:16px"></div>
<div class="c" style="left:1038px;top:1325px;width:121px;height:16px"></div>
<div class="c" style="left:1160px;top:1325px;width:78px;height:16px"></div>
<div class="c" style="left:1239px;top:1325px;width:500px;height:16px"></div>
<div class="c" style="left:748px;top:1342px;width:52px;height:16px"></div>
<div class="c" style="left:801px;top:1342px;width:171px;height:16px"></div>
<div class="c" style="left:973px;top:1342px;width:64px;height:16px"></div>
<div class="c" style="left:1038px;top:1342px;width:121px;height:16px"></div>
<div class="c" style="left:1160px;top:1342px;width:78px;height:16px"></div>
<div class="c" style="left:1239px;top:1342px;width:500px;height:16px"></div>
<div class="c" style="left:1740px;top:1246px;width:575px;height:112px"></div>
<div class="c" style="left:79px;top:1428px;width:49px;height:44px"></div>
<div class="c" style="left:129px;top:1428px;width:210px;height:44px"></div>
<div class="c" style="left:340px;top:1428px;width:407px;height:44px"></div>
<div class="c" style="left:748px;top:1428px;width:52px;height:14px"></div>
<div class="c" style="left:801px;top:1428px;width:171px;height:14px"></div>
<div class="c" style="left:973px;top:1428px;width:64px;height:14px"></div>
<div class="c" style="left:1038px;top:1428px;width:121px;height:14px"></div>
<div class="c" style="left:1160px;top:1428px;width:78px;height:14px"></div>
<div class="c" style="left:1239px;top:1428px;width:500px;height:14px"></div>
<div class="c" style="left:1740px;top:1428px;width:575px;height:14px"></div>
<div class="c" style="left:748px;top:1443px;width:52px;height:14px"></div>
<div class="c" style="left:801px;top:1443px;width:171px;height:14px"></div>
<div class="c" style="left:973px;top:1443px;width:64px;height:14px"></div>
<div class="c" style="left:1038px;top:1443px;width:121px;height:14px"></div>
<div class="c" style="left:1160px;top:1443px;width:78px;height:14px"></div>
<div class="c" style="left:1239px;top:1443px;width:500px;height:14px"></div>
<div class="c" style="left:1740px;top:1443px;width:575px;height:14px"></div>
<div class="c" style="left:748px;top:1458px;width:52px;height:14px"></div>
<div class="c" style="left:801px;top:1458px;width:171px;height:14px"></div>
<div class="c" style="left:973px;top:1458px;width:64px;height:14px"></div>
<div class="c" style="left:1038px;top:1458px;width:121px;height:14px"></div>
<div class="c" style="left:1160px;top:1458px;width:78px;height:14px"></div>
<div class="c" style="left:1239px;top:1458px;width:500px;height:14px"></div>
<div class="c" style="left:1740px;top:1458px;width:575px;height:14px"></div>
<div class="c" style="left:79px;top:163px;width:49px;height:14px"></div>
<div class="c" style="left:129px;top:163px;width:210px;height:14px"></div>
<div class="c" style="left:340px;top:163px;width:407px;height:14px"></div>
<div class="c" style="left:748px;top:163px;width:52px;height:14px"></div>
<div class="c" style="left:801px;top:163px;width:171px;height:14px"></div>
<div class="c" style="left:973px;top:163px;width:64px;height:14px"></div>
<div class="c" style="left:1038px;top:163px;width:121px;height:14px"></div>
<div class="c" style="left:1160px;top:163px;width:78px;height:14px"></div>
<div class="c" style="left:1239px;top:163px;width:500px;height:14px"></div>
<div class="c" style="left:1740px;top:163px;width:575px;height:14px"></div>
<div class="c" style="left:2316px;top:163px;width:283px;height:14px"></div>
<div class="c" style="left:2316px;top:178px;width:283px;height:14px"></div>
<div class="c" style="left:2316px;top:193px;width:283px;height:14px"></div>
<div class="c" style="left:2316px;top:208px;width:283px;height:14px"></div>
<div class="c" style="left:2316px;top:223px;width:283px;height:14px"></div>
<div class="c" style="left:2316px;top:238px;width:283px;height:14px"></div>
<div class="c" style="left:2316px;top:253px;width:283px;height:14px"></div>
<div class="c" style="left:2316px;top:268px;width:283px;height:14px"></div>
<div class="c" style="left:2316px;top:283px;width:283px;height:14px"></div>
<div class="c" style="left:2316px;top:298px;width:283px;height:14px"></div>
<div class="c" style="left:2316px;top:313px;width:283px;height:14px"></div>
<div class="c" style="left:2316px;top:328px;width:283px;height:14px"></div>
<div class="c" style="left:2316px;top:343px;width:283px;height:14px"></div>
<div class="c" style="left:79px;top:358px;width:49px;height:14px"></div>
<div class="c" style="left:129px;top:358px;width:210px;height:14px"></div>
<div class="c" style="left:340px;top:358px;width:407px;height:14px"></div>
<div class="c" style="left:748px;top:358px;width:52px;height:14px"></div>
<div class="c" style="left:801px;top:358px;width:171px;height:14px"></div>
<div class="c" style="left:973px;top:358px;width:64px;height:14px"></div>
<div class="c" style="left:1038px;top:358px;width:121px;height:14px"></div>
<div class="c" style="left:1160px;top:358px;width:78px;height:14px"></div>
<div class="c" style="left:1239px;top:358px;width:500px;height:14px"></div>
<div class="c" style="left:1740px;top:358px;width:575px;height:14px"></div>
<div class="c" style="left:2316px;top:358px;width:283px;height:14px"></div>
<div class="c" style="left:79px;top:373px;width:49px;height:14px"></div>
<div class="c" style="left:129px;top:373px;width:210px;height:14px"></div>
<div class="c" style="left:340px;top:373px;width:407px;height:14px"></div>
<div class="c" style="left:748px;top:373px;width:52px;height:14px"></div>
<div class="c" style="left:801px;top:373px;width:171px;height:14px"></div>
<div class="c" style="left:973px;top:373px;width:64px;height:14px"></div>
<div class="c" style="left:1038px;top:373px;width:121px;height:14px"></div>
<div class="c" style="left:1160px;top:373px;width:78px;height:14px"></div>
<div class="c" style="left:1239px;top:373px;width:500px;height:14px"></div>
<div class="c" style="left:1740px;top:373px;width:575px;height:14px"></div>
<div class="c" style="left:2316px;top:373px;width:283px;height:14px"></div>
<div class="c" style="left:79px;top:388px;width:49px;height:14px"></div>
<div class="c" style="left:129px;top:388px;width:210px;height:14px"></div>
<div class="c" style="left:340px;top:388px;width:407px;height:14px"></div>
<div class="c" style="left:748px;top:388px;width:52px;height:14px"></div>
<div class="c" style="left:801px;top:388px;width:171px;height:14px"></div>
<div class="c" style="left:973px;top:388px;width:64px;height:14px"></div>
<div class="c" style="left:1038px;top:388px;width:121px;height:14px"></div>
<div class="c" style="left:1160px;top:388px;width:78px;height:14px"></div>
<div class="c" style="left:1239px;top:388px;width:500px;height:14px"></div>
<div class="c" style="left:1740px;top:388px;width:575px;height:14px"></div>
<div class="c" style="left:2316px;top:388px;width:283px;height:14px"></div>
<div class="c" style="left:2316px;top:403px;width:283px;height:14px"></div>
<div class="c" style="left:2316px;top:418px;width:283px;height:14px"></div>
<div class="c" style="left:2316px;top:433px;width:283px;height:14px"></div>
<div class="c" style="left:2316px;top:448px;width:283px;height:14px"></div>
<div class="c" style="left:2316px;top:463px;width:283px;height:14px"></div>
<div class="c" style="left:2316px;top:478px;width:283px;height:14px"></div>
<div class="c" style="left:2316px;top:493px;width:283px;height:14px"></div>
<div class="c" style="left:2316px;top:508px;width:283px;height:14px"></div>
<div class="c" style="left:2316px;top:523px;width:283px;height:14px"></div>
<div class="c" style="left:2316px;top:538px;width:283px;height:14px"></div>
<div class="c" style="left:2316px;top:553px;width:283px;height:14px"></div>
<div class="c" style="left:2316px;top:568px;width:283px;height:14px"></div>
<div class="c" style="left:2316px;top:583px;width:283px;height:14px"></div>
<div class="c" style="left:2316px;top:598px;width:283px;height:14px"></div>
<div class="c" style="left:2316px;top:613px;width:283px;height:14px"></div>
<div class="c" style="left:2316px;top:628px;width:283px;height:14px"></div>
<div class="c" style="left:2316px;top:643px;width:283px;height:14px"></div>
<div class="c" style="left:2316px;top:658px;width:283px;height:14px"></div>
<div class="c" style="left:2316px;top:673px;width:283px;height:14px"></div>
<div class="c" style="left:2316px;top:688px;width:283px;height:14px"></div>
<div class="c" style="left:2316px;top:703px;width:283px;height:14px"></div>
<div class="c" style="left:2316px;top:718px;width:283px;height:14px"></div>
<div class="c" style="left:2316px;top:733px;width:283px;height:17px"></div>
<div class="c" style="left:2316px;top:751px;width:283px;height:16px"></div>
<div class="c" style="left:2316px;top:768px;width:283px;height:16px"></div>
<div class="c" style="left:2316px;top:785px;width:283px;height:16px"></div>
<div class="c" style="left:2316px;top:802px;width:283px;height:16px"></div>
<div class="c" style="left:2316px;top:819px;width:283px;height:16px"></div>
<div class="c" style="left:2316px;top:836px;width:283px;height:16px"></div>
<div class="c" style="left:2316px;top:853px;width:283px;height:16px"></div>
<div class="c" style="left:2316px;top:870px;width:283px;height:16px"></div>
<div class="c" style="left:2316px;top:887px;width:283px;height:16px"></div>
<div class="c" style="left:2316px;top:904px;width:283px;height:16px"></div>
<div class="c" style="left:2316px;top:921px;width:283px;height:16px"></div>
<div class="c" style="left:2316px;top:938px;width:283px;height:16px"></div>
<div class="c" style="left:2316px;top:955px;width:283px;height:16px"></div>
<div class="c" style="left:2316px;top:972px;width:283px;height:16px"></div>
<div class="c" style="left:2316px;top:989px;width:283px;height:16px"></div>
<div class="c" style="left:2316px;top:1006px;width:283px;height:16px"></div>
<div class="c" style="left:2316px;top:1023px;width:283px;height:16px"></div>
<div class="c" style="left:2316px;top:1040px;width:283px;height:16px"></div>
<div class="c" style="left:2316px;top:1057px;width:283px;height:16px"></div>
<div class="c" style="left:2316px;top:1074px;width:283px;height:16px"></div>
<div class="c" style="left:2316px;top:1091px;width:283px;height:16px"></div>
<div class="c" style="left:2316px;top:1108px;width:283px;height:16px"></div>
<div class="c" style="left:2316px;top:1125px;width:283px;height:16px"></div>
<div class="c" style="left:2316px;top:1142px;width:283px;height:16px"></div>
<div class="c" style="left:2316px;top:1159px;width:283px;height:16px"></div>
<div class="c" style="left:2316px;top:1176px;width:283px;height:16px"></div>
<div class="c" style="left:2316px;top:1193px;width:283px;height:16px"></div>
<div class="c" style="left:2316px;top:1210px;width:283px;height:16px"></div>
<div class="c" style="left:2316px;top:1227px;width:283px;height:16px"></div>
<div class="c" style="left:2316px;top:1246px;width:283px;height:14px"></div>
<div class="c" style="left:2316px;top:1261px;width:283px;height:14px"></div>
<div class="c" style="left:2316px;top:1276px;width:283px;height:14px"></div>
<div class="c" style="left:2316px;top:1291px;width:283px;height:16px"></div>
<div class="c" style="left:2316px;top:1308px;width:283px;height:16px"></div>
<div class="c" style="left:2316px;top:1325px;width:283px;height:16px"></div>
<div class="c" style="left:2316px;top:1342px;width:283px;height:16px"></div>
<div class="c" style="left:79px;top:1359px;width:49px;height:16px"></div>
<div class="c" style="left:129px;top:1359px;width:210px;height:16px"></div>
<div class="c" style="left:340px;top:1359px;width:407px;height:16px"></div>
<div class="c" style="left:748px;top:1359px;width:52px;height:16px"></div>
<div class="c" style="left:801px;top:1359px;width:171px;height:16px"></div>
<div class="c" style="left:973px;top:1359px;width:64px;height:16px"></div>
<div class="c" style="left:1038px;top:1359px;width:121px;height:16px"></div>
<div class="c" style="left:1160px;top:1359px;width:78px;height:16px"></div>
<div class="c" style="left:1239px;top:1359px;width:500px;height:16px"></div>
<div class="c" style="left:1740px;top:1359px;width:575px;height:16px"></div>
<div class="c" style="left:2316px;top:1359px;width:283px;height:16px"></div>
<div class="c" style="left:79px;top:1376px;width:49px;height:16px"></div>
<div class="c" style="left:129px;top:1376px;width:210px;height:16px"></div>
<div class="c" style="left:340px;top:1376px;width:407px;height:16px"></div>
<div class="c" style="left:748px;top:1376px;width:52px;height:16px"></div>
<div class="c" style="left:801px;top:1376px;width:171px;height:16px"></div>
<div class="c" style="left:973px;top:1376px;width:64px;height:16px"></div>
<div class="c" style="left:1038px;top:1376px;width:121px;height:16px"></div>
<div class="c" style="left:1160px;top:1376px;width:78px;height:16px"></div>
<div class="c" style="left:1239px;top:1376px;width:500px;height:16px"></div>
<div class="c" style="left:1740px;top:1376px;width:575px;height:16px"></div>
<div class="c" style="left:2316px;top:1376px;width:283px;height:16px"></div>
<div class="c" style="left:79px;top:1393px;width:49px;height:16px"></div>
<div class="c" style="left:129px;top:1393px;width:210px;height:16px"></div>
<div class="c" style="left:340px;top:1393px;width:407px;height:16px"></div>
<div class="c" style="left:748px;top:1393px;width:52px;height:16px"></div>
<div class="c" style="left:801px;top:1393px;width:171px;height:16px"></div>
<div class="c" style="left:973px;top:1393px;width:64px;height:16px"></div>
<div class="c" style="left:1038px;top:1393px;width:121px;height:16px"></div>
<div class="c" style="left:1160px;top:1393px;width:78px;height:16px"></div>
<div class="c" style="left:1239px;top:1393px;width:500px;height:16px"></div>
<div class="c" style="left:1740px;top:1393px;width:575px;height:16px"></div>
<div class="c" style="left:2316px;top:1393px;width:283px;height:16px"></div>
<div class="c" style="left:79px;top:1410px;width:49px;height:17px"></div>
<div class="c" style="left:129px;top:1410px;width:210px;height:17px"></div>
<div class="c" style="left:340px;top:1410px;width:407px;height:17px"></div>
<div class="c" style="left:748px;top:1410px;width:52px;height:17px"></div>
<div class="c" style="left:801px;top:1410px;width:171px;height:17px"></div>
<div class="c" style="left:973px;top:1410px;width:64px;height:17px"></div>
<div class="c" style="left:1038px;top:1410px;width:121px;height:17px"></div>
<div class="c" style="left:1160px;top:1410px;width:78px;height:17px"></div>
<div class="c" style="left:1239px;top:1410px;width:500px;height:17px"></div>
<div class="c" style="left:1740px;top:1410px;width:575px;height:17px"></div>
<div class="c" style="left:2316px;top:1410px;width:283px;height:17px"></div>
<div class="c" style="left:2316px;top:1428px;width:283px;height:14px"></div>
<div class="c" style="left:2316px;top:1443px;width:283px;height:14px"></div>
<div class="c" style="left:2316px;top:1458px;width:283px;height:14px"></div>
<div class="tc" style="left:80px;top:179px;width:49px;height:179px"><span class="tcn" style="top:82.74px;transform:scaleX(0.91)">C-5615</span></div>
<div class="tc" style="left:130px;top:179px;width:210px;height:179px"><span class="tcn" style="top:82.74px;transform:scaleX(1.025)">Directorate of Movement: Marine files</span></div>
<div class="tc" style="left:341px;top:179px;width:407px;height:179px"><span class="tcn" style="top:82.74px;transform:scaleX(0.96)">Ships - Eastbound Personnel - Ser E</span></div>
<div class="tc" style="left:749px;top:179px;width:52px;height:14px"><span class="tcn" style="top:2.24px;transform:scaleX(0.93)">3</span></div>
<div class="tc" style="left:802px;top:179px;width:600px;height:14px"><span class="tl" style="left:2px;top:2.24px;transform:scaleX(0.972)">George Washington</span></div>
<div class="tc" style="left:974px;top:179px;width:64px;height:29px"><span class="tcn" style="top:8.74px;transform:scaleX(0.93)">E.451</span></div>
<div class="tc" style="left:1039px;top:179px;width:121px;height:29px"><span class="tcn" style="top:8.74px;transform:scaleX(1.0)">Halifax</span></div>
<div class="tc" style="left:1161px;top:179px;width:78px;height:29px"><span class="tcn" style="top:8.74px;transform:scaleX(0.95)">20-1-42</span></div>
<div class="tc" style="left:1240px;top:179px;width:900px;height:14px"><span class="tl u" style="left:2px;top:2.24px;transform:scaleX(1.042)">https://heritage.canadiana.ca/view/oocihm.lac_reel_c5615/3?r=3&amp;s=1</span></div>
<div class="tc" style="left:749px;top:194px;width:52px;height:14px"><span class="tcn" style="top:2.24px;transform:scaleX(0.93)">378</span></div>
<div class="tc" style="left:802px;top:194px;width:600px;height:14px"><span class="tl" style="left:2px;top:2.24px;transform:scaleX(0.972)">George Washington</span></div>
<div class="tc" style="left:1240px;top:194px;width:900px;height:14px"><span class="tl u" style="left:2px;top:2.24px;transform:scaleX(1.042)">https://heritage.canadiana.ca/view/oocihm.lac_reel_c5615/378?r=0&amp;s=1</span></div>
<div class="tc" style="left:749px;top:209px;width:52px;height:14px"><span class="tcn" style="top:1.24px;transform:scaleX(0.93)">697</span></div>
<div class="tc" style="left:802px;top:209px;width:600px;height:14px"><span class="tl" style="left:2px;top:1.24px;transform:scaleX(0.972)">Baynao</span></div>
<div class="tc" style="left:974px;top:209px;width:64px;height:14px"><span class="tcn" style="top:1.24px;transform:scaleX(0.93)">E.452</span></div>
<div class="tc" style="left:1039px;top:209px;width:121px;height:14px"><span class="tcn" style="top:1.24px;transform:scaleX(1.0)">Halifax</span></div>
<div class="tc" style="left:1161px;top:209px;width:78px;height:14px"><span class="tcn" style="top:1.24px;transform:scaleX(0.95)">2-3-42</span></div>
<div class="tc" style="left:1240px;top:209px;width:900px;height:14px"><span class="tl u" style="left:2px;top:1.24px;transform:scaleX(1.042)">https://heritage.canadiana.ca/view/oocihm.lac_reel_c5615/697?r=0&amp;s=1</span></div>
<div class="tc" style="left:1741px;top:209px;width:900px;height:14px"><span class="tl u" style="left:2px;top:1.24px;transform:scaleX(1.008)">https://www.naval-history.net/PhotoWW1-08amcBayanoPS.JPG</span></div>
<div class="tc" style="left:749px;top:224px;width:52px;height:14px"><span class="tcn" style="top:1.24px;transform:scaleX(0.93)">740</span></div>
<div class="tc" style="left:802px;top:224px;width:600px;height:14px"><span class="tl" style="left:2px;top:1.24px;transform:scaleX(0.972)">Windsor Castle</span></div>
<div class="tc" style="left:974px;top:224px;width:64px;height:14px"><span class="tcn" style="top:1.24px;transform:scaleX(0.93)">E.453</span></div>
<div class="tc" style="left:1039px;top:224px;width:121px;height:14px"><span class="tcn" style="top:1.24px;transform:scaleX(1.0)">Halifax</span></div>
<div class="tc" style="left:1161px;top:224px;width:78px;height:14px"><span class="tcn" style="top:1.24px;transform:scaleX(0.95)">12-2-42</span></div>
<div class="tc" style="left:1240px;top:224px;width:900px;height:14px"><span class="tl u" style="left:2px;top:1.24px;transform:scaleX(1.042)">https://heritage.canadiana.ca/view/oocihm.lac_reel_c5615/740?r=0&amp;s=1</span></div>
<div class="tc" style="left:749px;top:239px;width:52px;height:14px"><span class="tcn" style="top:1.24px;transform:scaleX(0.93)">752</span></div>
<div class="tc" style="left:802px;top:239px;width:600px;height:14px"><span class="tl" style="left:2px;top:1.24px;transform:scaleX(0.972)">Franconia</span></div>
<div class="tc" style="left:974px;top:239px;width:64px;height:14px"><span class="tcn" style="top:1.24px;transform:scaleX(0.93)">E.454</span></div>
<div class="tc" style="left:1039px;top:239px;width:121px;height:14px"><span class="tcn" style="top:1.24px;transform:scaleX(1.0)">Halifax</span></div>
<div class="tc" style="left:1161px;top:239px;width:78px;height:14px"><span class="tcn" style="top:1.24px;transform:scaleX(0.95)">13-2-42</span></div>
<div class="tc" style="left:1240px;top:239px;width:900px;height:14px"><span class="tl u" style="left:2px;top:1.24px;transform:scaleX(1.042)">https://heritage.canadiana.ca/view/oocihm.lac_reel_c5615/752?r=0&amp;s=1</span></div>
<div class="tc" style="left:749px;top:254px;width:52px;height:14px"><span class="tcn" style="top:1.24px;transform:scaleX(0.93)">777</span></div>
<div class="tc" style="left:802px;top:254px;width:600px;height:14px"><span class="tl" style="left:2px;top:1.24px;transform:scaleX(0.972)">Empire Monarch</span></div>
<div class="tc" style="left:974px;top:254px;width:64px;height:14px"><span class="tcn" style="top:1.24px;transform:scaleX(0.93)">E.455</span></div>
<div class="tc" style="left:1039px;top:254px;width:121px;height:14px"><span class="tcn" style="top:1.24px;transform:scaleX(1.0)">Halifax</span></div>
<div class="tc" style="left:1161px;top:254px;width:78px;height:14px"><span class="tcn" style="top:1.24px;transform:scaleX(0.95)">11-2-42</span></div>
<div class="tc" style="left:1240px;top:254px;width:900px;height:14px"><span class="tl u" style="left:2px;top:1.24px;transform:scaleX(1.042)">https://heritage.canadiana.ca/view/oocihm.lac_reel_c5615/777?r=0&amp;s=1</span></div>
<div class="tc" style="left:749px;top:269px;width:52px;height:14px"><span class="tcn" style="top:1.24px;transform:scaleX(0.93)">1064</span></div>
<div class="tc" style="left:802px;top:269px;width:600px;height:14px"><span class="tl" style="left:2px;top:1.24px;transform:scaleX(0.972)">Cameronia</span></div>
<div class="tc" style="left:974px;top:269px;width:64px;height:14px"><span class="tcn" style="top:1.24px;transform:scaleX(0.93)">E.457</span></div>
<div class="tc" style="left:1039px;top:269px;width:121px;height:14px"><span class="tcn" style="top:1.24px;transform:scaleX(1.0)">Halifax</span></div>
<div class="tc" style="left:1161px;top:269px;width:78px;height:14px"><span class="tcn" style="top:1.24px;transform:scaleX(0.95)">1-3-42</span></div>
<div class="tc" style="left:1240px;top:269px;width:900px;height:14px"><span class="tl u" style="left:2px;top:1.24px;transform:scaleX(1.042)">https://heritage.canadiana.ca/view/oocihm.lac_reel_c5615/1064?r=0&amp;s=1</span></div>
<div class="tc" style="left:749px;top:314px;width:52px;height:14px"><span class="tcn" style="top:1.24px;transform:scaleX(0.93)">2052</span></div>
<div class="tc" style="left:802px;top:314px;width:600px;height:14px"><span class="tl" style="left:2px;top:1.24px;transform:scaleX(0.972)">Beaverhill</span></div>
<div class="tc" style="left:974px;top:314px;width:64px;height:14px"><span class="tcn" style="top:1.24px;transform:scaleX(0.93)">E.459</span></div>
<div class="tc" style="left:1039px;top:314px;width:121px;height:14px"><span class="tcn" style="top:1.24px;transform:scaleX(1.0)">Halifax</span></div>
<div class="tc" style="left:1161px;top:314px;width:78px;height:14px"><span class="tcn" style="top:1.24px;transform:scaleX(0.95)">9-3-42</span></div>
<div class="tc" style="left:1240px;top:314px;width:900px;height:14px"><span class="tl u" style="left:2px;top:1.24px;transform:scaleX(1.042)">https://heritage.canadiana.ca/view/oocihm.lac_reel_c5615/2052?r=0&amp;s=1</span></div>
<div class="tc" style="left:749px;top:329px;width:52px;height:14px"><span class="tcn" style="top:1.24px;transform:scaleX(0.93)">2097</span></div>
<div class="tc" style="left:802px;top:329px;width:600px;height:14px"><span class="tl" style="left:2px;top:1.24px;transform:scaleX(0.972)">Mondale</span></div>
<div class="tc" style="left:974px;top:329px;width:64px;height:14px"><span class="tcn" style="top:1.24px;transform:scaleX(0.93)">E.460</span></div>
<div class="tc" style="left:1039px;top:329px;width:121px;height:14px"><span class="tcn" style="top:1.24px;transform:scaleX(1.0)">Halifax</span></div>
<div class="tc" style="left:1161px;top:329px;width:78px;height:14px"><span class="tcn" style="top:1.24px;transform:scaleX(0.95)">5-3-42</span></div>
<div class="tc" style="left:1240px;top:329px;width:900px;height:14px"><span class="tl u" style="left:2px;top:1.24px;transform:scaleX(1.042)">https://heritage.canadiana.ca/view/oocihm.lac_reel_c5615/2097?r=0&amp;s=1</span></div>
<div class="tc" style="left:1741px;top:329px;width:900px;height:14px"><span class="tl u" style="left:2px;top:1.24px;transform:scaleX(1.062)">http://www.warsailors.com/singleships/mosdale.html</span></div>
<div class="tc" style="left:749px;top:344px;width:52px;height:14px"><span class="tcn" style="top:1.24px;transform:scaleX(0.93)">2123</span></div>
<div class="tc" style="left:802px;top:344px;width:600px;height:14px"><span class="tl" style="left:2px;top:1.24px;transform:scaleX(0.972)">Jamaica Producer</span></div>
<div class="tc" style="left:974px;top:344px;width:64px;height:14px"><span class="tcn" style="top:1.24px;transform:scaleX(0.93)">E.461</span></div>
<div class="tc" style="left:1039px;top:344px;width:121px;height:14px"><span class="tcn" style="top:1.24px;transform:scaleX(1.0)">Halifax</span></div>
<div class="tc" style="left:1161px;top:344px;width:78px;height:14px"><span class="tcn" style="top:1.24px;transform:scaleX(0.95)">25-2-42</span></div>
<div class="tc" style="left:1240px;top:344px;width:900px;height:14px"><span class="tl u" style="left:2px;top:1.24px;transform:scaleX(1.042)">https://heritage.canadiana.ca/view/oocihm.lac_reel_c5615/2123?r=0&amp;s=1</span></div>
<div class="tc" style="left:1741px;top:344px;width:900px;height:14px"><span class="tl u" style="left:2px;top:1.24px;transform:scaleX(1.029)">https://jpjamaica.com/wp-content/uploads/2016/06/O008-SS-Jamaica-Producer-II-1963-e1466090207257.jpg</span></div>
<div class="tc" style="left:749px;top:284px;width:52px;height:14px"><span class="tcn" style="top:1.24px;transform:scaleX(0.93)">1435</span></div>
<div class="tc" style="left:749px;top:299px;width:52px;height:14px"><span class="tcn" style="top:1.24px;transform:scaleX(0.93)">1718</span></div>
<div class="tc" style="left:802px;top:284px;width:600px;height:29px"><span class="tl" style="left:2px;top:7.74px;transform:scaleX(0.972)">Orion</span></div>
<div class="tc" style="left:974px;top:284px;width:64px;height:29px"><span class="tcn" style="top:7.74px;transform:scaleX(0.93)">E.458</span></div>
<div class="tc" style="left:1039px;top:284px;width:121px;height:29px"><span class="tcn" style="top:7.74px;transform:scaleX(1.0)">Halifax</span></div>
<div class="tc" style="left:1161px;top:284px;width:78px;height:29px"><span class="tcn" style="top:7.74px;transform:scaleX(0.95)">1-2-42</span></div>
<div class="tc" style="left:1240px;top:284px;width:900px;height:14px"><span class="tl u" style="left:2px;top:1.24px;transform:scaleX(1.042)">https://heritage.canadiana.ca/view/oocihm.lac_reel_c5615/1435?r=0&amp;s=1</span></div>
<div class="tc" style="left:1240px;top:299px;width:900px;height:14px"><span class="tl u" style="left:2px;top:1.24px;transform:scaleX(1.042)">https://heritage.canadiana.ca/view/oocihm.lac_reel_c5615/1718?r=0&amp;s=1</span></div>
<div class="tc" style="left:80px;top:404px;width:49px;height:329px"><span class="tcn" style="top:157.74px;transform:scaleX(0.91)">C-5616</span></div>
<div class="tc" style="left:130px;top:404px;width:210px;height:329px"><span class="tcn" style="top:157.74px;transform:scaleX(1.025)">Directorate of Movement: Marine files</span></div>
<div class="tc" style="left:341px;top:404px;width:407px;height:329px"><span class="tcn" style="top:157.74px;transform:scaleX(0.96)">Ships - Eastbound Personnel - Ser E</span></div>
<div class="tc" style="left:749px;top:404px;width:52px;height:14px"><span class="tcn" style="top:2.24px;transform:scaleX(0.93)">3</span></div>
<div class="tc" style="left:802px;top:404px;width:600px;height:14px"><span class="tl" style="left:2px;top:2.24px;transform:scaleX(0.972)">Batory</span></div>
<div class="tc" style="left:974px;top:404px;width:64px;height:14px"><span class="tcn" style="top:2.24px;transform:scaleX(0.93)">E.480</span></div>
<div class="tc" style="left:1039px;top:404px;width:121px;height:14px"><span class="tcn" style="top:2.24px;transform:scaleX(1.0)">Halifax</span></div>
<div class="tc" style="left:1161px;top:404px;width:78px;height:14px"><span class="tcn" style="top:2.24px;transform:scaleX(0.95)">3-5-43</span></div>
<div class="tc" style="left:1240px;top:404px;width:900px;height:14px"><span class="tl u" style="left:2px;top:2.24px;transform:scaleX(1.042)">http://heritage.canadiana.ca/view/oocihm.lac_reel_c5616/3?r=0&amp;s=1</span></div>
<div class="tc" style="left:1741px;top:404px;width:900px;height:14px"><span class="tl u" style="left:2px;top:2.24px;transform:scaleX(1.032)">http://www.poles.org/db/Pol_Museum/Batory_MS/Batory_ship.JPG</span></div>
<div class="tc" style="left:749px;top:419px;width:52px;height:14px"><span class="tcn" style="top:1.24px;transform:scaleX(0.93)">194</span></div>
<div class="tc" style="left:802px;top:419px;width:600px;height:14px"><span class="tl" style="left:2px;top:1.24px;transform:scaleX(0.972)">Letitia</span></div>
<div class="tc" style="left:974px;top:419px;width:64px;height:14px"><span class="tcn" style="top:1.24px;transform:scaleX(0.93)">E.481</span></div>
<div class="tc" style="left:1039px;top:419px;width:121px;height:14px"><span class="tcn" style="top:1.24px;transform:scaleX(1.0)">Halifax</span></div>
<div class="tc" style="left:1161px;top:419px;width:78px;height:14px"><span class="tcn" style="top:1.24px;transform:scaleX(0.95)">3-5-42</span></div>
<div class="tc" style="left:1240px;top:419px;width:900px;height:14px"><span class="tl u" style="left:2px;top:1.24px;transform:scaleX(1.042)">http://heritage.canadiana.ca/view/oocihm.lac_reel_c5616/194?r=undefined&amp;s=undefined</span></div>
<div class="tc" style="left:749px;top:434px;width:52px;height:14px"><span class="tcn" style="top:1.24px;transform:scaleX(0.93)">486</span></div>
<div class="tc" style="left:802px;top:434px;width:600px;height:14px"><span class="tl" style="left:2px;top:1.24px;transform:scaleX(0.972)">Andes</span></div>
<div class="tc" style="left:974px;top:434px;width:64px;height:14px"><span class="tcn" style="top:1.24px;transform:scaleX(0.93)">E.482</span></div>
<div class="tc" style="left:1039px;top:434px;width:121px;height:14px"><span class="tcn" style="top:1.24px;transform:scaleX(1.0)">Halifax</span></div>
<div class="tc" style="left:1161px;top:434px;width:78px;height:14px"><span class="tcn" style="top:1.24px;transform:scaleX(0.95)">3-5-42</span></div>
<div class="tc" style="left:1240px;top:434px;width:900px;height:14px"><span class="tl u" style="left:2px;top:1.24px;transform:scaleX(1.042)">http://heritage.canadiana.ca/view/oocihm.lac_reel_c5616/486?r=undefined&amp;s=undefined</span></div>
<div class="tc" style="left:1741px;top:434px;width:900px;height:14px"><span class="tl u" style="left:2px;top:1.24px;transform:scaleX(1.049)">https://live.staticflickr.com/1452/23686930780_b5cc258f6b_b.jpg</span></div>
<div class="tc" style="left:749px;top:449px;width:52px;height:14px"><span class="tcn" style="top:1.24px;transform:scaleX(0.93)">1207</span></div>
<div class="tc" style="left:802px;top:449px;width:600px;height:14px"><span class="tl" style="left:2px;top:1.24px;transform:scaleX(0.972)">Cathy - Partial Records</span></div>
<div class="tc" style="left:974px;top:449px;width:64px;height:14px"><span class="tcn" style="top:1.24px;transform:scaleX(0.93)">E.483</span></div>
<div class="tc" style="left:1039px;top:449px;width:121px;height:14px"><span class="tcn" style="top:1.24px;transform:scaleX(1.0)">Halifax</span></div>
<div class="tc" style="left:1161px;top:449px;width:78px;height:14px"><span class="tcn" style="top:1.24px;transform:scaleX(0.95)">3-5-42</span></div>
<div class="tc" style="left:1240px;top:449px;width:900px;height:14px"><span class="tl u" style="left:2px;top:1.24px;transform:scaleX(1.042)">http://heritage.canadiana.ca/view/oocihm.lac_reel_c5616/1207?r=undefined&amp;s=undefined</span></div>
<div class="tc" style="left:749px;top:464px;width:52px;height:14px"><span class="tcn" style="top:1.24px;transform:scaleX(0.93)">1231</span></div>
<div class="tc" style="left:802px;top:464px;width:600px;height:14px"><span class="tl" style="left:2px;top:1.24px;transform:scaleX(0.972)">Orcades</span></div>
<div class="tc" style="left:974px;top:464px;width:64px;height:14px"><span class="tcn" style="top:1.24px;transform:scaleX(0.93)">E.484</span></div>
<div class="tc" style="left:1039px;top:464px;width:121px;height:14px"><span class="tcn" style="top:1.24px;transform:scaleX(1.0)">Halifax</span></div>
<div class="tc" style="left:1161px;top:464px;width:78px;height:14px"><span class="tcn" style="top:1.24px;transform:scaleX(0.95)">3-5-42</span></div>
<div class="tc" style="left:1240px;top:464px;width:900px;height:14px"><span class="tl u" style="left:2px;top:1.24px;transform:scaleX(1.042)">http://heritage.canadiana.ca/view/oocihm.lac_reel_c5616/1231?r=undefined&amp;s=undefined</span></div>
<div class="tc" style="left:749px;top:479px;width:52px;height:14px"><span class="tcn" style="top:1.24px;transform:scaleX(0.93)">1607</span></div>
<div class="tc" style="left:802px;top:479px;width:600px;height:14px"><span class="tl" style="left:2px;top:1.24px;transform:scaleX(0.972)">Sarpedon</span></div>
<div class="tc" style="left:974px;top:479px;width:64px;height:14px"><span class="tcn" style="top:1.24px;transform:scaleX(0.93)">E.485</span></div>
<div class="tc" style="left:1039px;top:479px;width:121px;height:14px"><span class="tcn" style="top:1.24px;transform:scaleX(1.0)">Halifax</span></div>
<div class="tc" style="left:1161px;top:479px;width:78px;height:14px"><span class="tcn" style="top:1.24px;transform:scaleX(0.95)">14-4-42</span></div>
<div class="tc" style="left:1240px;top:479px;width:900px;height:14px"><span class="tl u" style="left:2px;top:1.24px;transform:scaleX(1.042)">http://heritage.canadiana.ca/view/oocihm.lac_reel_c5616/1607?r=undefined&amp;s=undefined</span></div>
<div class="tc" style="left:749px;top:494px;width:52px;height:14px"><span class="tcn" style="top:1.24px;transform:scaleX(0.93)">1649</span></div>
<div class="tc" style="left:802px;top:494px;width:600px;height:14px"><span class="tl" style="left:2px;top:1.24px;transform:scaleX(0.972)">Banfora</span></div>
<div class="tc" style="left:974px;top:494px;width:64px;height:14px"><span class="tcn" style="top:1.24px;transform:scaleX(0.93)">E.486</span></div>
<div class="tc" style="left:1039px;top:494px;width:121px;height:14px"><span class="tcn" style="top:1.24px;transform:scaleX(1.0)">Halifax</span></div>
<div class="tc" style="left:1161px;top:494px;width:78px;height:14px"><span class="tcn" style="top:1.24px;transform:scaleX(0.95)">15-4-42</span></div>
<div class="tc" style="left:1240px;top:494px;width:900px;height:14px"><span class="tl u" style="left:2px;top:1.24px;transform:scaleX(1.042)">http://heritage.canadiana.ca/view/oocihm.lac_reel_c5616/1649?r=undefined&amp;s=undefined</span></div>
<div class="tc" style="left:749px;top:509px;width:52px;height:14px"><span class="tcn" style="top:1.24px;transform:scaleX(0.93)">1920</span></div>
<div class="tc" style="left:802px;top:509px;width:600px;height:14px"><span class="tl" style="left:2px;top:1.24px;transform:scaleX(0.972)">Erria</span></div>
<div class="tc" style="left:974px;top:509px;width:64px;height:14px"><span class="tcn" style="top:1.24px;transform:scaleX(0.93)">E.487</span></div>
<div class="tc" style="left:1039px;top:509px;width:121px;height:14px"><span class="tcn" style="top:1.24px;transform:scaleX(1.0)">Sydney</span></div>
<div class="tc" style="left:1161px;top:509px;width:78px;height:14px"><span class="tcn" style="top:1.24px;transform:scaleX(0.95)">7-6-42</span></div>
<div class="tc" style="left:1240px;top:509px;width:900px;height:14px"><span class="tl u" style="left:2px;top:1.24px;transform:scaleX(1.042)">http://heritage.canadiana.ca/view/oocihm.lac_reel_c5616/1920?r=undefined&amp;s=undefined</span></div>
<div class="tc" style="left:749px;top:524px;width:52px;height:14px"><span class="tcn" style="top:1.24px;transform:scaleX(0.93)">1991</span></div>
<div class="tc" style="left:802px;top:524px;width:600px;height:14px"><span class="tl" style="left:2px;top:1.24px;transform:scaleX(0.972)">Settler</span></div>
<div class="tc" style="left:974px;top:524px;width:64px;height:14px"><span class="tcn" style="top:1.24px;transform:scaleX(0.93)">E.488</span></div>
<div class="tc" style="left:1039px;top:524px;width:121px;height:14px"><span class="tcn" style="top:1.24px;transform:scaleX(1.0)">Halifax</span></div>
<div class="tc" style="left:1161px;top:524px;width:78px;height:14px"><span class="tcn" style="top:1.24px;transform:scaleX(0.95)">17-5-42</span></div>
<div class="tc" style="left:1240px;top:524px;width:900px;height:14px"><span class="tl u" style="left:2px;top:1.24px;transform:scaleX(1.042)">http://heritage.canadiana.ca/view/oocihm.lac_reel_c5616/1991?r=0&amp;s=1</span></div>
<div class="tc" style="left:749px;top:539px;width:52px;height:14px"><span class="tcn" style="top:1.24px;transform:scaleX(0.93)">2023</span></div>
<div class="tc" style="left:802px;top:539px;width:600px;height:14px"><span class="tl" style="left:2px;top:1.24px;transform:scaleX(0.972)">Jamaica Producer</span></div>
<div class="tc" style="left:974px;top:539px;width:64px;height:14px"><span class="tcn" style="top:1.24px;transform:scaleX(0.93)">E.489</span></div>
<div class="tc" style="left:1039px;top:539px;width:121px;height:14px"><span class="tcn" style="top:1.24px;transform:scaleX(1.0)">Montreal</span></div>
<div class="tc" style="left:1161px;top:539px;width:78px;height:14px"><span class="tcn" style="top:1.24px;transform:scaleX(0.95)">28-5-42</span></div>
<div class="tc" style="left:1240px;top:539px;width:900px;height:14px"><span class="tl u" style="left:2px;top:1.24px;transform:scaleX(1.042)">http://heritage.canadiana.ca/view/oocihm.lac_reel_c5616/2023?r=undefined&amp;s=undefined</span></div>
<div class="tc" style="left:1741px;top:539px;width:900px;height:14px"><span class="tl u" style="left:2px;top:1.24px;transform:scaleX(1.029)">https://jpjamaica.com/wp-content/uploads/2016/06/O008-SS-Jamaica-Producer-II-1963-e1466090207257.jpg</span></div>
<div class="tc" style="left:749px;top:554px;width:52px;height:14px"><span class="tcn" style="top:1.24px;transform:scaleX(0.93)">2031</span></div>
<div class="tc" style="left:802px;top:554px;width:600px;height:14px"><span class="tl" style="left:2px;top:1.24px;transform:scaleX(0.972)">Batory</span></div>
<div class="tc" style="left:974px;top:554px;width:64px;height:14px"><span class="tcn" style="top:1.24px;transform:scaleX(0.93)">E.490</span></div>
<div class="tc" style="left:1039px;top:554px;width:121px;height:14px"><span class="tcn" style="top:1.24px;transform:scaleX(1.0)">Halifax</span></div>
<div class="tc" style="left:1161px;top:554px;width:78px;height:14px"><span class="tcn" style="top:1.24px;transform:scaleX(0.95)">3-6-42</span></div>
<div class="tc" style="left:1240px;top:554px;width:900px;height:14px"><span class="tl u" style="left:2px;top:1.24px;transform:scaleX(1.042)">http://heritage.canadiana.ca/view/oocihm.lac_reel_c5616/2031?r=undefined&amp;s=undefined</span></div>
<div class="tc" style="left:1741px;top:554px;width:900px;height:14px"><span class="tl u" style="left:2px;top:1.24px;transform:scaleX(1.032)">http://www.poles.org/db/Pol_Museum/Batory_MS/Batory_ship.JPG</span></div>
<div class="tc" style="left:749px;top:569px;width:52px;height:14px"><span class="tcn" style="top:1.24px;transform:scaleX(0.93)">2426</span></div>
<div class="tc" style="left:802px;top:569px;width:600px;height:14px"><span class="tl" style="left:2px;top:1.24px;transform:scaleX(0.972)">Duchess of York</span></div>
<div class="tc" style="left:974px;top:569px;width:64px;height:14px"><span class="tcn" style="top:1.24px;transform:scaleX(0.93)">E.491</span></div>
<div class="tc" style="left:1039px;top:569px;width:121px;height:14px"><span class="tcn" style="top:1.24px;transform:scaleX(1.0)">Halifax</span></div>
<div class="tc" style="left:1161px;top:569px;width:78px;height:14px"><span class="tcn" style="top:1.24px;transform:scaleX(0.95)">3-6-42</span></div>
<div class="tc" style="left:1240px;top:569px;width:900px;height:14px"><span class="tl u" style="left:2px;top:1.24px;transform:scaleX(1.042)">http://heritage.canadiana.ca/view/oocihm.lac_reel_c5616/2426?r=undefined&amp;s=undefined</span></div>
<div class="tc" style="left:749px;top:584px;width:52px;height:14px"><span class="tcn" style="top:1.24px;transform:scaleX(0.93)">3052</span></div>
<div class="tc" style="left:802px;top:584px;width:600px;height:14px"><span class="tl" style="left:2px;top:1.24px;transform:scaleX(0.972)">Newfoundland (Hospital Ship)</span></div>
<div class="tc" style="left:974px;top:584px;width:64px;height:14px"><span class="tcn" style="top:1.24px;transform:scaleX(0.93)">E.492</span></div>
<div class="tc" style="left:1039px;top:584px;width:121px;height:14px"><span class="tcn" style="top:1.24px;transform:scaleX(1.0)">Halifax</span></div>
<div class="tc" style="left:1161px;top:584px;width:78px;height:14px"><span class="tcn" style="top:1.24px;transform:scaleX(0.95)">22-6-42</span></div>
<div class="tc" style="left:1240px;top:584px;width:900px;height:14px"><span class="tl u" style="left:2px;top:1.24px;transform:scaleX(1.042)">http://heritage.canadiana.ca/view/oocihm.lac_reel_c5616/3052?r=0&amp;s=1</span></div>
<div class="tc" style="left:749px;top:599px;width:52px;height:14px"><span class="tcn" style="top:1.24px;transform:scaleX(0.93)">3066</span></div>
<div class="tc" style="left:802px;top:599px;width:600px;height:14px"><span class="tl" style="left:2px;top:1.24px;transform:scaleX(0.972)">Letitia</span></div>
<div class="tc" style="left:974px;top:599px;width:64px;height:14px"><span class="tcn" style="top:1.24px;transform:scaleX(0.93)">E.493</span></div>
<div class="tc" style="left:1039px;top:599px;width:121px;height:14px"><span class="tcn" style="top:1.24px;transform:scaleX(1.0)">Halifax</span></div>
<div class="tc" style="left:1161px;top:599px;width:78px;height:14px"><span class="tcn" style="top:1.24px;transform:scaleX(0.95)">15-6-42</span></div>
<div class="tc" style="left:1240px;top:599px;width:900px;height:14px"><span class="tl u" style="left:2px;top:1.24px;transform:scaleX(1.042)">http://heritage.canadiana.ca/view/oocihm.lac_reel_c5616/3066?r=0&amp;s=1</span></div>
<div class="tc" style="left:749px;top:614px;width:52px;height:14px"><span class="tcn" style="top:1.24px;transform:scaleX(0.93)">3535</span></div>
<div class="tc" style="left:802px;top:614px;width:600px;height:14px"><span class="tl" style="left:2px;top:1.24px;transform:scaleX(0.972)">Empress of Japan</span></div>
<div class="tc" style="left:974px;top:614px;width:64px;height:14px"><span class="tcn" style="top:1.24px;transform:scaleX(0.93)">E.494</span></div>
<div class="tc" style="left:1039px;top:614px;width:121px;height:14px"><span class="tcn" style="top:1.24px;transform:scaleX(1.0)">Halifax</span></div>
<div class="tc" style="left:1161px;top:614px;width:78px;height:14px"><span class="tcn" style="top:1.24px;transform:scaleX(0.95)">15-6-42</span></div>
<div class="tc" style="left:1240px;top:614px;width:900px;height:14px"><span class="tl u" style="left:2px;top:1.24px;transform:scaleX(1.042)">http://heritage.canadiana.ca/view/oocihm.lac_reel_c5616/3535?r=undefined&amp;s=undefined</span></div>
<div class="tc" style="left:749px;top:629px;width:52px;height:14px"><span class="tcn" style="top:1.24px;transform:scaleX(0.93)">4004</span></div>
<div class="tc" style="left:802px;top:629px;width:600px;height:14px"><span class="tl" style="left:2px;top:1.24px;transform:scaleX(0.972)">Tjitjalenglka</span></div>
<div class="tc" style="left:974px;top:629px;width:64px;height:14px"><span class="tcn" style="top:1.24px;transform:scaleX(0.93)">E.495</span></div>
<div class="tc" style="left:1039px;top:629px;width:121px;height:14px"><span class="tcn" style="top:1.24px;transform:scaleX(1.0)">Halifax</span></div>
<div class="tc" style="left:1161px;top:629px;width:78px;height:14px"><span class="tcn" style="top:1.24px;transform:scaleX(0.95)">7-6-42</span></div>
<div class="tc" style="left:1240px;top:629px;width:900px;height:14px"><span class="tl u" style="left:2px;top:1.24px;transform:scaleX(1.042)">http://heritage.canadiana.ca/view/oocihm.lac_reel_c5616/4004?r=undefined&amp;s=undefined</span></div>
<div class="tc" style="left:749px;top:644px;width:52px;height:14px"><span class="tcn" style="top:1.24px;transform:scaleX(0.93)">4011</span></div>
<div class="tc" style="left:802px;top:644px;width:600px;height:14px"><span class="tl" style="left:2px;top:1.24px;transform:scaleX(0.972)">Lady Rodney</span></div>
<div class="tc" style="left:974px;top:644px;width:64px;height:14px"><span class="tcn" style="top:1.24px;transform:scaleX(0.93)">E.496 A</span></div>
<div class="tc" style="left:1039px;top:644px;width:121px;height:14px"><span class="tcn" style="top:1.24px;transform:scaleX(1.0)">Halifax</span></div>
<div class="tc" style="left:1161px;top:644px;width:78px;height:14px"><span class="tcn" style="top:1.24px;transform:scaleX(0.95)">17-6-42</span></div>
<div class="tc" style="left:1240px;top:644px;width:900px;height:14px"><span class="tl u" style="left:2px;top:1.24px;transform:scaleX(1.042)">http://heritage.canadiana.ca/view/oocihm.lac_reel_c5616/4011?r=undefined&amp;s=undefined</span></div>
<div class="tc" style="left:749px;top:659px;width:52px;height:14px"><span class="tcn" style="top:1.24px;transform:scaleX(0.93)">4075</span></div>
<div class="tc" style="left:802px;top:659px;width:600px;height:14px"><span class="tl" style="left:2px;top:1.24px;transform:scaleX(0.972)">Lady Rodney</span></div>
<div class="tc" style="left:974px;top:659px;width:64px;height:14px"><span class="tcn" style="top:1.24px;transform:scaleX(0.93)">E.496 B</span></div>
<div class="tc" style="left:1039px;top:659px;width:121px;height:14px"><span class="tcn" style="top:1.24px;transform:scaleX(1.0)">Quebec City</span></div>
<div class="tc" style="left:1161px;top:659px;width:78px;height:14px"><span class="tcn" style="top:1.24px;transform:scaleX(0.95)">4-7-42</span></div>
<div class="tc" style="left:1240px;top:659px;width:900px;height:14px"><span class="tl u" style="left:2px;top:1.24px;transform:scaleX(1.042)">http://heritage.canadiana.ca/view/oocihm.lac_reel_c5616/4075?r=undefined&amp;s=undefined</span></div>
<div class="tc" style="left:749px;top:674px;width:52px;height:14px"><span class="tcn" style="top:1.24px;transform:scaleX(0.93)">4213</span></div>
<div class="tc" style="left:802px;top:674px;width:600px;height:14px"><span class="tl" style="left:2px;top:1.24px;transform:scaleX(0.972)">Lady Rodney</span></div>
<div class="tc" style="left:974px;top:674px;width:64px;height:14px"><span class="tcn" style="top:1.24px;transform:scaleX(0.93)">E.496 C</span></div>
<div class="tc" style="left:1039px;top:674px;width:121px;height:14px"><span class="tcn" style="top:1.24px;transform:scaleX(1.0)">Quebec City</span></div>
<div class="tc" style="left:1161px;top:674px;width:78px;height:14px"><span class="tcn" style="top:1.24px;transform:scaleX(0.95)">18-7-42</span></div>
<div class="tc" style="left:1240px;top:674px;width:900px;height:14px"><span class="tl u" style="left:2px;top:1.24px;transform:scaleX(1.042)">http://heritage.canadiana.ca/view/oocihm.lac_reel_c5616/4213?r=undefined&amp;s=undefined</span></div>
<div class="tc" style="left:749px;top:689px;width:52px;height:14px"><span class="tcn" style="top:1.24px;transform:scaleX(0.93)">4296</span></div>
<div class="tc" style="left:802px;top:689px;width:600px;height:14px"><span class="tl" style="left:2px;top:1.24px;transform:scaleX(0.972)">Lady Rodney</span></div>
<div class="tc" style="left:974px;top:689px;width:64px;height:14px"><span class="tcn" style="top:1.24px;transform:scaleX(0.93)">E.496 D</span></div>
<div class="tc" style="left:1039px;top:689px;width:121px;height:14px"><span class="tcn" style="top:1.24px;transform:scaleX(1.0)">Quebec City</span></div>
<div class="tc" style="left:1161px;top:689px;width:78px;height:14px"><span class="tcn" style="top:1.24px;transform:scaleX(0.95)">2-8-42</span></div>
<div class="tc" style="left:1240px;top:689px;width:900px;height:14px"><span class="tl u" style="left:2px;top:1.24px;transform:scaleX(1.042)">http://heritage.canadiana.ca/view/oocihm.lac_reel_c5616/4296?r=undefined&amp;s=undefined</span></div>
<div class="tc" style="left:749px;top:704px;width:52px;height:14px"><span class="tcn" style="top:1.24px;transform:scaleX(0.93)">4452</span></div>
<div class="tc" style="left:802px;top:704px;width:600px;height:14px"><span class="tl" style="left:2px;top:1.24px;transform:scaleX(0.972)">Pasteur</span></div>
<div class="tc" style="left:974px;top:704px;width:64px;height:14px"><span class="tcn" style="top:1.24px;transform:scaleX(0.93)">E.497</span></div>
<div class="tc" style="left:1039px;top:704px;width:121px;height:14px"><span class="tcn" style="top:1.24px;transform:scaleX(1.0)">Halifax</span></div>
<div class="tc" style="left:1240px;top:704px;width:900px;height:14px"><span class="tl u" style="left:2px;top:1.24px;transform:scaleX(1.042)">http://heritage.canadiana.ca/view/oocihm.lac_reel_c5616/4452?r=0&amp;s=1</span></div>
<div class="tc" style="left:1741px;top:704px;width:900px;height:14px"><span class="tl u" style="left:2px;top:1.24px;transform:scaleX(1.043)">https://i.pinimg.com/736x/8d/1d/6e/8d1d6ec9e2504208efcef91444a6395a--pasteur-cruise.jpg</span></div>
<div class="tc" style="left:749px;top:719px;width:52px;height:14px"><span class="tcn" style="top:1.24px;transform:scaleX(0.93)">4536</span></div>
<div class="tc" style="left:802px;top:719px;width:600px;height:14px"><span class="tl" style="left:2px;top:1.24px;transform:scaleX(0.972)">Dominion Monarch</span></div>
<div class="tc" style="left:974px;top:719px;width:64px;height:14px"><span class="tcn" style="top:1.24px;transform:scaleX(0.93)">E.498 1</span></div>
<div class="tc" style="left:1039px;top:719px;width:121px;height:14px"><span class="tcn" style="top:1.24px;transform:scaleX(1.0)">Halifax</span></div>
<div class="tc" style="left:1161px;top:719px;width:78px;height:14px"><span class="tcn" style="top:1.24px;transform:scaleX(0.95)">21-7-42</span></div>
<div class="tc" style="left:1240px;top:719px;width:900px;height:14px"><span class="tl u" style="left:2px;top:1.24px;transform:scaleX(1.042)">http://heritage.canadiana.ca/view/oocihm.lac_reel_c5616/4536?r=0&amp;s=1</span></div>
<div class="tc" style="left:1741px;top:644px;width:900px;height:59px"><span class="tl u" style="left:2px;top:22.74px;transform:scaleX(1.017)">http://www.forposterityssake.ca/Navy/LADY_RODNEY.htm</span></div>
<div class="tc" style="left:80px;top:734px;width:49px;height:510px"><span class="tcn" style="top:248.24px;transform:scaleX(0.91)">C-5617</span></div>
<div class="tc" style="left:130px;top:734px;width:210px;height:510px"><span class="tcn" style="top:248.24px;transform:scaleX(1.025)">Directorate of Movement: Marine files</span></div>
<div class="tc" style="left:341px;top:734px;width:407px;height:510px"><span class="tcn" style="top:248.24px;transform:scaleX(0.96)">Ships - Eastbound Personnel - Ser E</span></div>
<div class="tc" style="left:749px;top:734px;width:52px;height:17px"><span class="tcn" style="top:1.74px;transform:scaleX(0.93)">3</span></div>
<div class="tc" style="left:802px;top:734px;width:600px;height:17px"><span class="tl" style="left:2px;top:1.74px;transform:scaleX(0.972)">Dominion Monarch</span></div>
<div class="tc" style="left:974px;top:734px;width:64px;height:17px"><span class="tcn" style="top:1.74px;transform:scaleX(0.93)">E.498 2</span></div>
<div class="tc" style="left:1039px;top:734px;width:121px;height:17px"><span class="tcn" style="top:1.74px;transform:scaleX(1.0)">Halifax</span></div>
<div class="tc" style="left:1161px;top:734px;width:78px;height:17px"><span class="tcn" style="top:1.74px;transform:scaleX(0.95)">20-7-42</span></div>
<div class="tc" style="left:1240px;top:734px;width:900px;height:17px"><span class="tl u" style="left:2px;top:1.74px;transform:scaleX(1.042)">https://heritage.canadiana.ca/view/oocihm.lac_reel_c5617/5?r=0&amp;s=1</span></div>
<div class="tc" style="left:749px;top:752px;width:52px;height:16px"><span class="tcn" style="top:1.24px;transform:scaleX(0.93)">312</span></div>
<div class="tc" style="left:802px;top:752px;width:600px;height:16px"><span class="tl" style="left:2px;top:1.24px;transform:scaleX(0.972)">Letitia</span></div>
<div class="tc" style="left:974px;top:752px;width:64px;height:16px"><span class="tcn" style="top:1.24px;transform:scaleX(0.93)">E.499</span></div>
<div class="tc" style="left:1039px;top:752px;width:121px;height:16px"><span class="tcn" style="top:1.24px;transform:scaleX(1.0)">Halifax</span></div>
<div class="tc" style="left:1161px;top:752px;width:78px;height:16px"><span class="tcn" style="top:1.24px;transform:scaleX(0.95)">21-7-42</span></div>
<div class="tc" style="left:1240px;top:752px;width:900px;height:16px"><span class="tl u" style="left:2px;top:1.24px;transform:scaleX(1.042)">https://heritage.canadiana.ca/view/oocihm.lac_reel_c5617/312?r=0&amp;s=1</span></div>
<div class="tc" style="left:749px;top:769px;width:52px;height:16px"><span class="tcn" style="top:1.24px;transform:scaleX(0.93)">722</span></div>
<div class="tc" style="left:802px;top:769px;width:600px;height:16px"><span class="tl" style="left:2px;top:1.24px;transform:scaleX(0.972)">Mosdale</span></div>
<div class="tc" style="left:974px;top:769px;width:64px;height:16px"><span class="tcn" style="top:1.24px;transform:scaleX(0.93)">E.500</span></div>
<div class="tc" style="left:1039px;top:769px;width:121px;height:16px"><span class="tcn" style="top:1.24px;transform:scaleX(1.0)">St Johns, NB</span></div>
<div class="tc" style="left:1161px;top:769px;width:78px;height:16px"><span class="tcn" style="top:1.24px;transform:scaleX(0.95)">16-6-42</span></div>
<div class="tc" style="left:1240px;top:769px;width:900px;height:16px"><span class="tl u" style="left:2px;top:1.24px;transform:scaleX(1.042)">https://heritage.canadiana.ca/view/oocihm.lac_reel_c5617/722?r=0&amp;s=2</span></div>
<div class="tc" style="left:1741px;top:769px;width:900px;height:16px"><span class="tl u" style="left:2px;top:1.24px;transform:scaleX(1.062)">http://www.warsailors.com/singleships/mosdale.html</span></div>
<div class="tc" style="left:749px;top:786px;width:52px;height:16px"><span class="tcn" style="top:1.24px;transform:scaleX(0.93)">748</span></div>
<div class="tc" style="left:802px;top:786px;width:600px;height:16px"><span class="tl" style="left:2px;top:1.24px;transform:scaleX(0.972)">Settler</span></div>
<div class="tc" style="left:974px;top:786px;width:64px;height:16px"><span class="tcn" style="top:1.24px;transform:scaleX(0.93)">E.501</span></div>
<div class="tc" style="left:1039px;top:786px;width:121px;height:16px"><span class="tcn" style="top:1.24px;transform:scaleX(1.0)">Halifax</span></div>
<div class="tc" style="left:1161px;top:786px;width:78px;height:16px"><span class="tcn" style="top:1.24px;transform:scaleX(0.95)">6-7-42</span></div>
<div class="tc" style="left:1240px;top:786px;width:900px;height:16px"><span class="tl u" style="left:2px;top:1.24px;transform:scaleX(1.042)">https://heritage.canadiana.ca/view/oocihm.lac_reel_c5617/748?r=0&amp;s=2</span></div>
<div class="tc" style="left:749px;top:803px;width:52px;height:16px"><span class="tcn" style="top:1.24px;transform:scaleX(0.93)">786</span></div>
<div class="tc" style="left:802px;top:803px;width:600px;height:16px"><span class="tl" style="left:2px;top:1.24px;transform:scaleX(0.972)">Duchess of Bedford</span></div>
<div class="tc" style="left:974px;top:803px;width:64px;height:16px"><span class="tcn" style="top:1.24px;transform:scaleX(0.93)">E.502 A</span></div>
<div class="tc" style="left:1039px;top:803px;width:121px;height:16px"><span class="tcn" style="top:1.24px;transform:scaleX(1.0)">New York</span></div>
<div class="tc" style="left:1161px;top:803px;width:78px;height:16px"><span class="tcn" style="top:1.24px;transform:scaleX(0.95)">1-7-42</span></div>
<div class="tc" style="left:1240px;top:803px;width:900px;height:16px"><span class="tl u" style="left:2px;top:1.24px;transform:scaleX(1.042)">https://heritage.canadiana.ca/view/oocihm.lac_reel_c5617/786?r=0&amp;s=2</span></div>
<div class="tc" style="left:749px;top:820px;width:52px;height:16px"><span class="tcn" style="top:1.24px;transform:scaleX(0.93)">820</span></div>
<div class="tc" style="left:802px;top:820px;width:600px;height:16px"><span class="tl" style="left:2px;top:1.24px;transform:scaleX(0.972)">Aorangi</span></div>
<div class="tc" style="left:974px;top:820px;width:64px;height:16px"><span class="tcn" style="top:1.24px;transform:scaleX(0.93)">E.502 B</span></div>
<div class="tc" style="left:1039px;top:820px;width:121px;height:16px"><span class="tcn" style="top:1.24px;transform:scaleX(1.0)">New York</span></div>
<div class="tc" style="left:1161px;top:820px;width:78px;height:16px"><span class="tcn" style="top:1.24px;transform:scaleX(0.95)">5-7-42</span></div>
<div class="tc" style="left:1240px;top:820px;width:900px;height:16px"><span class="tl u" style="left:2px;top:1.24px;transform:scaleX(1.042)">https://heritage.canadiana.ca/view/oocihm.lac_reel_c5617/820?r=0&amp;s=2</span></div>
<div class="tc" style="left:749px;top:837px;width:52px;height:16px"><span class="tcn" style="top:1.24px;transform:scaleX(0.93)">853</span></div>
<div class="tc" style="left:802px;top:837px;width:600px;height:16px"><span class="tl" style="left:2px;top:1.24px;transform:scaleX(0.972)">Maloja</span></div>
<div class="tc" style="left:974px;top:837px;width:64px;height:16px"><span class="tcn" style="top:1.24px;transform:scaleX(0.93)">E.502 C</span></div>
<div class="tc" style="left:1039px;top:837px;width:121px;height:16px"><span class="tcn" style="top:1.24px;transform:scaleX(1.0)">New York</span></div>
<div class="tc" style="left:1161px;top:837px;width:78px;height:16px"><span class="tcn" style="top:1.24px;transform:scaleX(0.95)">1-7-42</span></div>
<div class="tc" style="left:1240px;top:837px;width:900px;height:16px"><span class="tl u" style="left:2px;top:1.24px;transform:scaleX(1.042)">https://heritage.canadiana.ca/view/oocihm.lac_reel_c5617/853?r=0&amp;s=1</span></div>
<div class="tc" style="left:749px;top:854px;width:52px;height:16px"><span class="tcn" style="top:1.24px;transform:scaleX(0.93)">888</span></div>
<div class="tc" style="left:802px;top:854px;width:600px;height:16px"><span class="tl" style="left:2px;top:1.24px;transform:scaleX(0.972)">Winnipeg</span></div>
<div class="tc" style="left:974px;top:854px;width:64px;height:16px"><span class="tcn" style="top:1.24px;transform:scaleX(0.93)">E.503</span></div>
<div class="tc" style="left:1039px;top:854px;width:121px;height:16px"><span class="tcn" style="top:1.24px;transform:scaleX(1.0)">Halifax</span></div>
<div class="tc" style="left:1161px;top:854px;width:78px;height:16px"><span class="tcn" style="top:1.24px;transform:scaleX(0.95)">18-7-42</span></div>
<div class="tc" style="left:1240px;top:854px;width:900px;height:16px"><span class="tl u" style="left:2px;top:1.24px;transform:scaleX(1.042)">https://heritage.canadiana.ca/view/oocihm.lac_reel_c5617/888?r=0&amp;s=1</span></div>
<div class="tc" style="left:749px;top:871px;width:52px;height:16px"><span class="tcn" style="top:1.24px;transform:scaleX(0.93)">922</span></div>
<div class="tc" style="left:802px;top:871px;width:600px;height:16px"><span class="tl" style="left:2px;top:1.24px;transform:scaleX(0.972)">Baynao</span></div>
<div class="tc" style="left:974px;top:871px;width:64px;height:16px"><span class="tcn" style="top:1.24px;transform:scaleX(0.93)">E.504</span></div>
<div class="tc" style="left:1039px;top:871px;width:121px;height:16px"><span class="tcn" style="top:1.24px;transform:scaleX(1.0)">Halifax</span></div>
<div class="tc" style="left:1161px;top:871px;width:78px;height:16px"><span class="tcn" style="top:1.24px;transform:scaleX(0.95)">9-3-42</span></div>
<div class="tc" style="left:1240px;top:871px;width:900px;height:16px"><span class="tl u" style="left:2px;top:1.24px;transform:scaleX(1.042)">https://heritage.canadiana.ca/view/oocihm.lac_reel_c5617/922?r=0&amp;s=2</span></div>
<div class="tc" style="left:1741px;top:871px;width:900px;height:16px"><span class="tl u" style="left:2px;top:1.24px;transform:scaleX(1.008)">https://www.naval-history.net/PhotoWW1-08amcBayanoPS.JPG</span></div>
<div class="tc" style="left:749px;top:888px;width:52px;height:16px"><span class="tcn" style="top:1.24px;transform:scaleX(0.93)">988</span></div>
<div class="tc" style="left:802px;top:888px;width:600px;height:16px"><span class="tl" style="left:2px;top:1.24px;transform:scaleX(0.972)">Empress of Canada</span></div>
<div class="tc" style="left:974px;top:888px;width:64px;height:16px"><span class="tcn" style="top:1.24px;transform:scaleX(0.93)">E.505</span></div>
<div class="tc" style="left:1161px;top:888px;width:78px;height:16px"><span class="tcn" style="top:1.24px;transform:scaleX(0.95)">Cancelled</span></div>
<div class="tc" style="left:1240px;top:888px;width:900px;height:16px"><span class="tl u" style="left:2px;top:1.24px;transform:scaleX(1.042)">https://heritage.canadiana.ca/view/oocihm.lac_reel_c5617/988?r=0&amp;s=2</span></div>
<div class="tc" style="left:1741px;top:888px;width:900px;height:16px"><span class="tl u" style="left:2px;top:1.24px;transform:scaleX(1.065)">https://i.ytimg.com/vi/ywmR8UBRUHI/maxresdefault.jpg</span></div>
<div class="tc" style="left:749px;top:905px;width:52px;height:16px"><span class="tcn" style="top:1.24px;transform:scaleX(0.93)">1010</span></div>
<div class="tc" style="left:802px;top:905px;width:600px;height:16px"><span class="tl" style="left:2px;top:1.24px;transform:scaleX(0.972)">Capetown Castle</span></div>
<div class="tc" style="left:974px;top:905px;width:64px;height:16px"><span class="tcn" style="top:1.24px;transform:scaleX(0.93)">E.506</span></div>
<div class="tc" style="left:1039px;top:905px;width:121px;height:16px"><span class="tcn" style="top:1.24px;transform:scaleX(1.0)">Halifax</span></div>
<div class="tc" style="left:1161px;top:905px;width:78px;height:16px"><span class="tcn" style="top:1.24px;transform:scaleX(0.95)">9-8-42</span></div>
<div class="tc" style="left:1240px;top:905px;width:900px;height:16px"><span class="tl u" style="left:2px;top:1.24px;transform:scaleX(1.042)">https://heritage.canadiana.ca/view/oocihm.lac_reel_c5617/1010?r=0&amp;s=2</span></div>
<div class="tc" style="left:749px;top:922px;width:52px;height:16px"><span class="tcn" style="top:1.24px;transform:scaleX(0.93)">1757</span></div>
<div class="tc" style="left:802px;top:922px;width:600px;height:16px"><span class="tl" style="left:2px;top:1.24px;transform:scaleX(0.972)">Cameronia</span></div>
<div class="tc" style="left:974px;top:922px;width:64px;height:16px"><span class="tcn" style="top:1.24px;transform:scaleX(0.93)">E.507</span></div>
<div class="tc" style="left:1039px;top:922px;width:121px;height:16px"><span class="tcn" style="top:1.24px;transform:scaleX(1.0)">Halifax</span></div>
<div class="tc" style="left:1161px;top:922px;width:78px;height:16px"><span class="tcn" style="top:1.24px;transform:scaleX(0.95)">9-8-42</span></div>
<div class="tc" style="left:1240px;top:922px;width:900px;height:16px"><span class="tl u" style="left:2px;top:1.24px;transform:scaleX(1.042)">https://heritage.canadiana.ca/view/oocihm.lac_reel_c5617/1757?r=0&amp;s=2</span></div>
<div class="tc" style="left:749px;top:939px;width:52px;height:16px"><span class="tcn" style="top:1.24px;transform:scaleX(0.93)">2057</span></div>
<div class="tc" style="left:802px;top:939px;width:600px;height:16px"><span class="tl" style="left:2px;top:1.24px;transform:scaleX(0.972)">Ponce</span></div>
<div class="tc" style="left:974px;top:939px;width:64px;height:16px"><span class="tcn" style="top:1.24px;transform:scaleX(0.93)">E.508</span></div>
<div class="tc" style="left:1161px;top:939px;width:78px;height:16px"><span class="tcn" style="top:1.24px;transform:scaleX(0.95)">Cancelled</span></div>
<div class="tc" style="left:1240px;top:939px;width:900px;height:16px"><span class="tl u" style="left:2px;top:1.24px;transform:scaleX(1.042)">https://heritage.canadiana.ca/view/oocihm.lac_reel_c5617/2057?r=0&amp;s=3</span></div>
<div class="tc" style="left:749px;top:956px;width:52px;height:16px"><span class="tcn" style="top:1.24px;transform:scaleX(0.93)">2060</span></div>
<div class="tc" style="left:802px;top:956px;width:600px;height:16px"><span class="tl" style="left:2px;top:1.24px;transform:scaleX(0.972)">Mosdale</span></div>
<div class="tc" style="left:974px;top:956px;width:64px;height:16px"><span class="tcn" style="top:1.24px;transform:scaleX(0.93)">E.509</span></div>
<div class="tc" style="left:1039px;top:956px;width:121px;height:16px"><span class="tcn" style="top:1.24px;transform:scaleX(1.0)">Halifax</span></div>
<div class="tc" style="left:1161px;top:956px;width:78px;height:16px"><span class="tcn" style="top:1.24px;transform:scaleX(0.95)">9-8-42</span></div>
<div class="tc" style="left:1240px;top:956px;width:900px;height:16px"><span class="tl u" style="left:2px;top:1.24px;transform:scaleX(1.042)">https://heritage.canadiana.ca/view/oocihm.lac_reel_c5617/2060?r=0&amp;s=1</span></div>
<div class="tc" style="left:1741px;top:956px;width:900px;height:16px"><span class="tl u" style="left:2px;top:1.24px;transform:scaleX(1.062)">http://www.warsailors.com/singleships/mosdale.html</span></div>
<div class="tc" style="left:749px;top:973px;width:52px;height:16px"><span class="tcn" style="top:1.24px;transform:scaleX(0.93)">2081</span></div>
<div class="tc" style="left:802px;top:973px;width:600px;height:16px"><span class="tl" style="left:2px;top:1.24px;transform:scaleX(0.972)">Cavina</span></div>
<div class="tc" style="left:974px;top:973px;width:64px;height:16px"><span class="tcn" style="top:1.24px;transform:scaleX(0.93)">E.510</span></div>
<div class="tc" style="left:1039px;top:973px;width:121px;height:16px"><span class="tcn" style="top:1.24px;transform:scaleX(1.0)">Halifax</span></div>
<div class="tc" style="left:1161px;top:973px;width:78px;height:16px"><span class="tcn" style="top:1.24px;transform:scaleX(0.95)">9-8-42</span></div>
<div class="tc" style="left:1240px;top:973px;width:900px;height:16px"><span class="tl u" style="left:2px;top:1.24px;transform:scaleX(1.042)">https://heritage.canadiana.ca/view/oocihm.lac_reel_c5617/2081?r=0&amp;s=2</span></div>
<div class="tc" style="left:749px;top:990px;width:52px;height:16px"><span class="tcn" style="top:1.24px;transform:scaleX(0.93)">2124</span></div>
<div class="tc" style="left:802px;top:990px;width:600px;height:16px"><span class="tl" style="left:2px;top:1.24px;transform:scaleX(0.972)">Awatea</span></div>
<div class="tc" style="left:974px;top:990px;width:64px;height:16px"><span class="tcn" style="top:1.24px;transform:scaleX(0.93)">E.511</span></div>
<div class="tc" style="left:1039px;top:990px;width:121px;height:16px"><span class="tcn" style="top:1.24px;transform:scaleX(1.0)">Halifax</span></div>
<div class="tc" style="left:1161px;top:990px;width:78px;height:16px"><span class="tcn" style="top:1.24px;transform:scaleX(0.95)">22-8-42</span></div>
<div class="tc" style="left:1240px;top:990px;width:900px;height:16px"><span class="tl u" style="left:2px;top:1.24px;transform:scaleX(1.042)">https://heritage.canadiana.ca/view/oocihm.lac_reel_c5617/2124?r=0&amp;s=1</span></div>
<div class="tc" style="left:749px;top:1007px;width:52px;height:16px"><span class="tcn" style="top:1.24px;transform:scaleX(0.93)">2962</span></div>
<div class="tc" style="left:802px;top:1007px;width:600px;height:16px"><span class="tl" style="left:2px;top:1.24px;transform:scaleX(0.972)">Strathnaver</span></div>
<div class="tc" style="left:974px;top:1007px;width:64px;height:16px"><span class="tcn" style="top:1.24px;transform:scaleX(0.93)">E.512</span></div>
<div class="tc" style="left:1039px;top:1007px;width:121px;height:16px"><span class="tcn" style="top:1.24px;transform:scaleX(1.0)">New York</span></div>
<div class="tc" style="left:1161px;top:1007px;width:78px;height:16px"><span class="tcn" style="top:1.24px;transform:scaleX(0.95)">2-8-42</span></div>
<div class="tc" style="left:1240px;top:1007px;width:900px;height:16px"><span class="tl u" style="left:2px;top:1.24px;transform:scaleX(1.042)">https://heritage.canadiana.ca/view/oocihm.lac_reel_c5617/2962?r=0&amp;s=1</span></div>
<div class="tc" style="left:1741px;top:1007px;width:900px;height:16px"><span class="tl u" style="left:2px;top:1.24px;transform:scaleX(1.0385)">https://en.wikipedia.org/wiki/RMS_Strathnaver#/media/File:StateLibQld_1_170511_Strathnaver_(ship).jpg</span></div>
<div class="tc" style="left:749px;top:1024px;width:52px;height:16px"><span class="tcn" style="top:1.24px;transform:scaleX(0.93)">2974</span></div>
<div class="tc" style="left:802px;top:1024px;width:600px;height:16px"><span class="tl" style="left:2px;top:1.24px;transform:scaleX(0.972)">Mooltan</span></div>
<div class="tc" style="left:974px;top:1024px;width:64px;height:16px"><span class="tcn" style="top:1.24px;transform:scaleX(0.93)">E.513</span></div>
<div class="tc" style="left:1039px;top:1024px;width:121px;height:16px"><span class="tcn" style="top:1.24px;transform:scaleX(1.0)">New York</span></div>
<div class="tc" style="left:1240px;top:1024px;width:900px;height:16px"><span class="tl u" style="left:2px;top:1.24px;transform:scaleX(1.042)">https://heritage.canadiana.ca/view/oocihm.lac_reel_c5617/2974?r=0&amp;s=1</span></div>
<div class="tc" style="left:749px;top:1041px;width:52px;height:16px"><span class="tcn" style="top:1.24px;transform:scaleX(0.93)">2986</span></div>
<div class="tc" style="left:802px;top:1041px;width:600px;height:16px"><span class="tl" style="left:2px;top:1.24px;transform:scaleX(0.972)">Ormonde</span></div>
<div class="tc" style="left:974px;top:1041px;width:64px;height:16px"><span class="tcn" style="top:1.24px;transform:scaleX(0.93)">E.514</span></div>
<div class="tc" style="left:1039px;top:1041px;width:121px;height:16px"><span class="tcn" style="top:1.24px;transform:scaleX(1.0)">Boston</span></div>
<div class="tc" style="left:1240px;top:1041px;width:900px;height:16px"><span class="tl u" style="left:2px;top:1.24px;transform:scaleX(1.042)">https://heritage.canadiana.ca/view/oocihm.lac_reel_c5617/2986?r=0&amp;s=1</span></div>
<div class="tc" style="left:1741px;top:1041px;width:900px;height:16px"><span class="tl u" style="left:2px;top:1.24px;transform:scaleX(1.041)">https://i.pinimg.com/originals/4a/63/ae/4a63aed565eeba100359a427acb62724.jpg</span></div>
<div class="tc" style="left:749px;top:1058px;width:52px;height:16px"><span class="tcn" style="top:1.24px;transform:scaleX(0.93)">2999</span></div>
<div class="tc" style="left:802px;top:1058px;width:600px;height:16px"><span class="tl" style="left:2px;top:1.24px;transform:scaleX(0.972)">Duchess of Bedford</span></div>
<div class="tc" style="left:974px;top:1058px;width:64px;height:16px"><span class="tcn" style="top:1.24px;transform:scaleX(0.93)">E.515</span></div>
<div class="tc" style="left:1039px;top:1058px;width:121px;height:16px"><span class="tcn" style="top:1.24px;transform:scaleX(1.0)">Boston</span></div>
<div class="tc" style="left:1240px;top:1058px;width:900px;height:16px"><span class="tl u" style="left:2px;top:1.24px;transform:scaleX(1.042)">https://heritage.canadiana.ca/view/oocihm.lac_reel_c5617/2999?r=0&amp;s=1</span></div>
<div class="tc" style="left:749px;top:1075px;width:52px;height:16px"><span class="tcn" style="top:1.24px;transform:scaleX(0.93)">3006</span></div>
<div class="tc" style="left:802px;top:1075px;width:600px;height:16px"><span class="tl" style="left:2px;top:1.24px;transform:scaleX(0.972)">Letitia</span></div>
<div class="tc" style="left:974px;top:1075px;width:64px;height:16px"><span class="tcn" style="top:1.24px;transform:scaleX(0.93)">E.516</span></div>
<div class="tc" style="left:1039px;top:1075px;width:121px;height:16px"><span class="tcn" style="top:1.24px;transform:scaleX(1.0)">Halifax</span></div>
<div class="tc" style="left:1161px;top:1075px;width:78px;height:16px"><span class="tcn" style="top:1.24px;transform:scaleX(0.95)">22-8-42</span></div>
<div class="tc" style="left:1240px;top:1075px;width:900px;height:16px"><span class="tl u" style="left:2px;top:1.24px;transform:scaleX(1.042)">https://heritage.canadiana.ca/view/oocihm.lac_reel_c5617/3006?r=0&amp;s=1</span></div>
<div class="tc" style="left:749px;top:1092px;width:52px;height:16px"><span class="tcn" style="top:1.24px;transform:scaleX(0.93)">3353</span></div>
<div class="tc" style="left:802px;top:1092px;width:600px;height:16px"><span class="tl" style="left:2px;top:1.24px;transform:scaleX(0.972)">Nea Hellas</span></div>
<div class="tc" style="left:974px;top:1092px;width:64px;height:16px"><span class="tcn" style="top:1.24px;transform:scaleX(0.93)">E.517</span></div>
<div class="tc" style="left:1161px;top:1092px;width:78px;height:16px"><span class="tcn" style="top:1.24px;transform:scaleX(0.95)">Cancelled</span></div>
<div class="tc" style="left:1240px;top:1092px;width:900px;height:16px"><span class="tl u" style="left:2px;top:1.24px;transform:scaleX(1.042)">https://heritage.canadiana.ca/view/oocihm.lac_reel_c5617/3353?r=0&amp;s=1</span></div>
<div class="tc" style="left:749px;top:1109px;width:52px;height:16px"><span class="tcn" style="top:1.24px;transform:scaleX(0.93)">3357</span></div>
<div class="tc" style="left:802px;top:1109px;width:600px;height:16px"><span class="tl" style="left:2px;top:1.24px;transform:scaleX(0.972)">Strathmore</span></div>
<div class="tc" style="left:974px;top:1109px;width:64px;height:16px"><span class="tcn" style="top:1.24px;transform:scaleX(0.93)">E.518</span></div>
<div class="tc" style="left:1039px;top:1109px;width:121px;height:16px"><span class="tcn" style="top:1.24px;transform:scaleX(1.0)">Halifax</span></div>
<div class="tc" style="left:1161px;top:1109px;width:78px;height:16px"><span class="tcn" style="top:1.24px;transform:scaleX(0.95)">22-8-42</span></div>
<div class="tc" style="left:1240px;top:1109px;width:900px;height:16px"><span class="tl u" style="left:2px;top:1.24px;transform:scaleX(1.042)">https://heritage.canadiana.ca/view/oocihm.lac_reel_c5617/3357?r=0&amp;s=1</span></div>
<div class="tc" style="left:1741px;top:1109px;width:900px;height:16px"><span class="tl u" style="left:2px;top:1.24px;transform:scaleX(1.0385)">https://en.wikipedia.org/wiki/RMS_Strathnaver#/media/File:StateLibQld_1_170511_Strathnaver_(ship).jpg</span></div>
<div class="tc" style="left:749px;top:1126px;width:52px;height:16px"><span class="tcn" style="top:1.24px;transform:scaleX(0.93)">3974</span></div>
<div class="tc" style="left:802px;top:1126px;width:600px;height:16px"><span class="tl" style="left:2px;top:1.24px;transform:scaleX(0.972)">Dempo</span></div>
<div class="tc" style="left:974px;top:1126px;width:64px;height:16px"><span class="tcn" style="top:1.24px;transform:scaleX(0.93)">E.519</span></div>
<div class="tc" style="left:1240px;top:1126px;width:900px;height:16px"><span class="tl u" style="left:2px;top:1.24px;transform:scaleX(1.042)">https://heritage.canadiana.ca/view/oocihm.lac_reel_c5617/3974?r=0&amp;s=2</span></div>
<div class="tc" style="left:749px;top:1143px;width:52px;height:16px"><span class="tcn" style="top:1.24px;transform:scaleX(0.93)">3991</span></div>
<div class="tc" style="left:802px;top:1143px;width:600px;height:16px"><span class="tl" style="left:2px;top:1.24px;transform:scaleX(0.972)">Akarca</span></div>
<div class="tc" style="left:974px;top:1143px;width:64px;height:16px"><span class="tcn" style="top:1.24px;transform:scaleX(0.93)">E.520</span></div>
<div class="tc" style="left:1039px;top:1143px;width:121px;height:16px"><span class="tcn" style="top:1.24px;transform:scaleX(1.0)">Halifax</span></div>
<div class="tc" style="left:1161px;top:1143px;width:78px;height:16px"><span class="tcn" style="top:1.24px;transform:scaleX(0.95)">6-9-42</span></div>
<div class="tc" style="left:1240px;top:1143px;width:900px;height:16px"><span class="tl u" style="left:2px;top:1.24px;transform:scaleX(1.042)">https://heritage.canadiana.ca/view/oocihm.lac_reel_c5617/3991?r=0&amp;s=1</span></div>
<div class="tc" style="left:749px;top:1160px;width:52px;height:16px"><span class="tcn" style="top:1.24px;transform:scaleX(0.93)">4066</span></div>
<div class="tc" style="left:802px;top:1160px;width:600px;height:16px"><span class="tl" style="left:2px;top:1.24px;transform:scaleX(0.972)">Fleurus</span></div>
<div class="tc" style="left:974px;top:1160px;width:64px;height:16px"><span class="tcn" style="top:1.24px;transform:scaleX(0.93)">E.521</span></div>
<div class="tc" style="left:1039px;top:1160px;width:121px;height:16px"><span class="tcn" style="top:1.24px;transform:scaleX(1.0)">Montreal</span></div>
<div class="tc" style="left:1161px;top:1160px;width:78px;height:16px"><span class="tcn" style="top:1.24px;transform:scaleX(0.95)">13-9-42</span></div>
<div class="tc" style="left:1240px;top:1160px;width:900px;height:16px"><span class="tl u" style="left:2px;top:1.24px;transform:scaleX(1.042)">https://heritage.canadiana.ca/view/oocihm.lac_reel_c5617/4066?r=0&amp;s=1</span></div>
<div class="tc" style="left:749px;top:1177px;width:52px;height:16px"><span class="tcn" style="top:1.24px;transform:scaleX(0.93)">4146</span></div>
<div class="tc" style="left:802px;top:1177px;width:600px;height:16px"><span class="tl" style="left:2px;top:1.24px;transform:scaleX(0.972)">Pasteur</span></div>
<div class="tc" style="left:974px;top:1177px;width:64px;height:16px"><span class="tcn" style="top:1.24px;transform:scaleX(0.93)">E.522</span></div>
<div class="tc" style="left:1039px;top:1177px;width:121px;height:16px"><span class="tcn" style="top:1.24px;transform:scaleX(1.0)">Halifax</span></div>
<div class="tc" style="left:1161px;top:1177px;width:78px;height:16px"><span class="tcn" style="top:1.24px;transform:scaleX(0.95)">24-9-42</span></div>
<div class="tc" style="left:1240px;top:1177px;width:900px;height:16px"><span class="tl u" style="left:2px;top:1.24px;transform:scaleX(1.042)">https://heritage.canadiana.ca/view/oocihm.lac_reel_c5617/4146?r=0&amp;s=1</span></div>
<div class="tc" style="left:1741px;top:1177px;width:900px;height:16px"><span class="tl u" style="left:2px;top:1.24px;transform:scaleX(1.043)">https://i.pinimg.com/736x/8d/1d/6e/8d1d6ec9e2504208efcef91444a6395a--pasteur-cruise.jpg</span></div>
<div class="tc" style="left:749px;top:1194px;width:52px;height:16px"><span class="tcn" style="top:1.24px;transform:scaleX(0.93)">4742</span></div>
<div class="tc" style="left:802px;top:1194px;width:600px;height:16px"><span class="tl" style="left:2px;top:1.24px;transform:scaleX(0.972)">Indochinois</span></div>
<div class="tc" style="left:974px;top:1194px;width:64px;height:16px"><span class="tcn" style="top:1.24px;transform:scaleX(0.93)">E.523</span></div>
<div class="tc" style="left:1039px;top:1194px;width:121px;height:16px"><span class="tcn" style="top:1.24px;transform:scaleX(1.0)">Halifax</span></div>
<div class="tc" style="left:1161px;top:1194px;width:78px;height:16px"><span class="tcn" style="top:1.24px;transform:scaleX(0.95)">23-9-42</span></div>
<div class="tc" style="left:1240px;top:1194px;width:900px;height:16px"><span class="tl u" style="left:2px;top:1.24px;transform:scaleX(1.042)">https://heritage.canadiana.ca/view/oocihm.lac_reel_c5617/4742?r=0&amp;s=1</span></div>
<div class="tc" style="left:749px;top:1211px;width:52px;height:16px"><span class="tcn" style="top:1.24px;transform:scaleX(0.93)">4775</span></div>
<div class="tc" style="left:802px;top:1211px;width:600px;height:16px"><span class="tl" style="left:2px;top:1.24px;transform:scaleX(0.972)">Queen Mary</span></div>
<div class="tc" style="left:974px;top:1211px;width:64px;height:16px"><span class="tcn" style="top:1.24px;transform:scaleX(0.93)">E.524</span></div>
<div class="tc" style="left:1039px;top:1211px;width:121px;height:16px"><span class="tcn" style="top:1.24px;transform:scaleX(1.0)">New York</span></div>
<div class="tc" style="left:1161px;top:1211px;width:78px;height:16px"><span class="tcn" style="top:1.24px;transform:scaleX(0.95)">23-9-42</span></div>
<div class="tc" style="left:1240px;top:1211px;width:900px;height:16px"><span class="tl u" style="left:2px;top:1.24px;transform:scaleX(1.042)">https://heritage.canadiana.ca/view/oocihm.lac_reel_c5617/4775?r=0&amp;s=1</span></div>
<div class="tc" style="left:1741px;top:1211px;width:900px;height:16px"><span class="tl u" style="left:2px;top:1.24px;transform:scaleX(1.055)">https://i.ebayimg.com/images/i/261879149816-0-1/s-l1000.jpg</span></div>
<div class="tc" style="left:749px;top:1228px;width:52px;height:16px"><span class="tcn" style="top:1.24px;transform:scaleX(0.93)">4831</span></div>
<div class="tc" style="left:802px;top:1228px;width:600px;height:16px"><span class="tl" style="left:2px;top:1.24px;transform:scaleX(0.972)">Lady Rodney</span></div>
<div class="tc" style="left:974px;top:1228px;width:64px;height:16px"><span class="tcn" style="top:1.24px;transform:scaleX(0.93)">E.525 A</span></div>
<div class="tc" style="left:1039px;top:1228px;width:121px;height:16px"><span class="tcn" style="top:1.24px;transform:scaleX(1.0)">Halifax</span></div>
<div class="tc" style="left:1161px;top:1228px;width:78px;height:16px"><span class="tcn" style="top:1.24px;transform:scaleX(0.95)">17-8-42</span></div>
<div class="tc" style="left:1240px;top:1228px;width:900px;height:16px"><span class="tl u" style="left:2px;top:1.24px;transform:scaleX(1.042)">https://heritage.canadiana.ca/view/oocihm.lac_reel_c5617/4831?r=0&amp;s=3</span></div>
<div class="tc" style="left:1741px;top:1228px;width:900px;height:16px"><span class="tl u" style="left:2px;top:1.24px;transform:scaleX(1.017)">http://www.forposterityssake.ca/Navy/LADY_RODNEY.htm</span></div>
<div class="tc" style="left:76px;top:1247px;width:49px;height:112px"><span class="tcn" style="top:49.24px;transform:scaleX(0.91)">C-5618</span></div>
<div class="tc" style="left:130px;top:1247px;width:210px;height:112px"><span class="tcn" style="top:49.24px;transform:scaleX(1.025)">Directorate of Movement: Marine files</span></div>
<div class="tc" style="left:341px;top:1247px;width:407px;height:112px"><span class="tcn" style="top:49.24px;transform:scaleX(0.96)">Ships - Eastbound Personnel - Ser E</span></div>
<div class="tc" style="left:749px;top:1247px;width:52px;height:14px"><span class="tcn" style="top:2.74px;transform:scaleX(0.93)">3</span></div>
<div class="tc" style="left:802px;top:1247px;width:600px;height:14px"><span class="tl" style="left:2px;top:2.74px;transform:scaleX(0.972)">Lady Rodney</span></div>
<div class="tc" style="left:974px;top:1247px;width:64px;height:14px"><span class="tcn" style="top:2.74px;transform:scaleX(0.93)">E.525 B</span></div>
<div class="tc" style="left:1039px;top:1247px;width:121px;height:14px"><span class="tcn" style="top:2.74px;transform:scaleX(1.0)">Halifax</span></div>
<div class="tc" style="left:1161px;top:1247px;width:78px;height:14px"><span class="tcn" style="top:2.74px;transform:scaleX(0.95)">30-8-42</span></div>
<div class="tc" style="left:1240px;top:1247px;width:900px;height:14px"><span class="tl u" style="left:2px;top:2.74px;transform:scaleX(1.042)">http://heritage.canadiana.ca/view/oocihm.lac_reel_c5618/3?r=0&amp;s=1</span></div>
<div class="tc" style="left:749px;top:1262px;width:52px;height:14px"><span class="tcn" style="top:1.24px;transform:scaleX(0.93)">132</span></div>
<div class="tc" style="left:802px;top:1262px;width:600px;height:14px"><span class="tl" style="left:2px;top:1.24px;transform:scaleX(0.972)">Lady Rodney</span></div>
<div class="tc" style="left:974px;top:1262px;width:64px;height:14px"><span class="tcn" style="top:1.24px;transform:scaleX(0.93)">E.525 C</span></div>
<div class="tc" style="left:1039px;top:1262px;width:121px;height:14px"><span class="tcn" style="top:1.24px;transform:scaleX(1.0)">Halifax</span></div>
<div class="tc" style="left:1161px;top:1262px;width:78px;height:14px"><span class="tcn" style="top:1.24px;transform:scaleX(0.95)">15-9-42</span></div>
<div class="tc" style="left:1240px;top:1262px;width:900px;height:14px"><span class="tl u" style="left:2px;top:1.24px;transform:scaleX(1.042)">http://heritage.canadiana.ca/view/oocihm.lac_reel_c5618/132?r=0&amp;s=1</span></div>
<div class="tc" style="left:749px;top:1277px;width:52px;height:14px"><span class="tcn" style="top:1.24px;transform:scaleX(0.93)">238</span></div>
<div class="tc" style="left:802px;top:1277px;width:600px;height:14px"><span class="tl" style="left:2px;top:1.24px;transform:scaleX(0.972)">Lady Rodney</span></div>
<div class="tc" style="left:974px;top:1277px;width:64px;height:14px"><span class="tcn" style="top:1.24px;transform:scaleX(0.93)">E.525 D</span></div>
<div class="tc" style="left:1039px;top:1277px;width:121px;height:14px"><span class="tcn" style="top:1.24px;transform:scaleX(1.0)">Halifax</span></div>
<div class="tc" style="left:1161px;top:1277px;width:78px;height:14px"><span class="tcn" style="top:1.24px;transform:scaleX(0.95)">26-9-42</span></div>
<div class="tc" style="left:1240px;top:1277px;width:900px;height:14px"><span class="tl u" style="left:2px;top:1.24px;transform:scaleX(1.042)">http://heritage.canadiana.ca/view/oocihm.lac_reel_c5618/238?r=0&amp;s=1</span></div>
<div class="tc" style="left:749px;top:1292px;width:52px;height:16px"><span class="tcn" style="top:1.24px;transform:scaleX(0.93)">381</span></div>
<div class="tc" style="left:802px;top:1292px;width:600px;height:16px"><span class="tl" style="left:2px;top:1.24px;transform:scaleX(0.972)">Lady Rodney</span></div>
<div class="tc" style="left:974px;top:1292px;width:64px;height:16px"><span class="tcn" style="top:1.24px;transform:scaleX(0.93)">E.525 E</span></div>
<div class="tc" style="left:1039px;top:1292px;width:121px;height:16px"><span class="tcn" style="top:1.24px;transform:scaleX(1.0)">Halifax</span></div>
<div class="tc" style="left:1161px;top:1292px;width:78px;height:16px"><span class="tcn" style="top:1.24px;transform:scaleX(0.95)">13-10-42</span></div>
<div class="tc" style="left:1240px;top:1292px;width:900px;height:16px"><span class="tl u" style="left:2px;top:1.24px;transform:scaleX(1.042)">http://heritage.canadiana.ca/view/oocihm.lac_reel_c5618/381?r=0&amp;s=1</span></div>
<div class="tc" style="left:749px;top:1309px;width:52px;height:16px"><span class="tcn" style="top:1.24px;transform:scaleX(0.93)">541</span></div>
<div class="tc" style="left:802px;top:1309px;width:600px;height:16px"><span class="tl" style="left:2px;top:1.24px;transform:scaleX(0.972)">Lady Rodney</span></div>
<div class="tc" style="left:974px;top:1309px;width:64px;height:16px"><span class="tcn" style="top:1.24px;transform:scaleX(0.93)">E.525 F</span></div>
<div class="tc" style="left:1039px;top:1309px;width:121px;height:16px"><span class="tcn" style="top:1.24px;transform:scaleX(1.0)">Halifax</span></div>
<div class="tc" style="left:1161px;top:1309px;width:78px;height:16px"><span class="tcn" style="top:1.24px;transform:scaleX(0.95)">25-19-42</span></div>
<div class="tc" style="left:1240px;top:1309px;width:900px;height:16px"><span class="tl u" style="left:2px;top:1.24px;transform:scaleX(1.042)">http://heritage.canadiana.ca/view/oocihm.lac_reel_c5618/541?r=undefined&amp;s=undefined</span></div>
<div class="tc" style="left:749px;top:1326px;width:52px;height:16px"><span class="tcn" style="top:1.24px;transform:scaleX(0.93)">729</span></div>
<div class="tc" style="left:802px;top:1326px;width:600px;height:16px"><span class="tl" style="left:2px;top:1.24px;transform:scaleX(0.972)">Lady Rodney</span></div>
<div class="tc" style="left:974px;top:1326px;width:64px;height:16px"><span class="tcn" style="top:1.24px;transform:scaleX(0.93)">E.525 G</span></div>
<div class="tc" style="left:1039px;top:1326px;width:121px;height:16px"><span class="tcn" style="top:1.24px;transform:scaleX(1.0)">Halifax</span></div>
<div class="tc" style="left:1161px;top:1326px;width:78px;height:16px"><span class="tcn" style="top:1.24px;transform:scaleX(0.95)">13-11-42</span></div>
<div class="tc" style="left:1240px;top:1326px;width:900px;height:16px"><span class="tl u" style="left:2px;top:1.24px;transform:scaleX(1.042)">http://heritage.canadiana.ca/view/oocihm.lac_reel_c5618/729?r=undefined&amp;s=undefined</span></div>
<div class="tc" style="left:749px;top:1343px;width:52px;height:16px"><span class="tcn" style="top:1.24px;transform:scaleX(0.93)">923</span></div>
<div class="tc" style="left:802px;top:1343px;width:600px;height:16px"><span class="tl" style="left:2px;top:1.24px;transform:scaleX(0.972)">Lady Rodney</span></div>
<div class="tc" style="left:974px;top:1343px;width:64px;height:16px"><span class="tcn" style="top:1.24px;transform:scaleX(0.93)">E.525 H</span></div>
<div class="tc" style="left:1039px;top:1343px;width:121px;height:16px"><span class="tcn" style="top:1.24px;transform:scaleX(1.0)">Halifax</span></div>
<div class="tc" style="left:1161px;top:1343px;width:78px;height:16px"><span class="tcn" style="top:1.24px;transform:scaleX(0.95)">19-11-42</span></div>
<div class="tc" style="left:1240px;top:1343px;width:900px;height:16px"><span class="tl u" style="left:2px;top:1.24px;transform:scaleX(1.042)">http://heritage.canadiana.ca/view/oocihm.lac_reel_c5618/923?r=undefined&amp;s=undefined</span></div>
<div class="tc" style="left:1741px;top:1247px;width:900px;height:112px"><span class="tl u" style="left:2px;top:49.24px;transform:scaleX(1.017)">http://www.forposterityssake.ca/Navy/LADY_RODNEY.htm</span></div>
<div class="tc" style="left:749px;top:1429px;width:52px;height:14px"><span class="tcn" style="top:2.24px;transform:scaleX(0.93)">3</span></div>
<div class="tc" style="left:802px;top:1429px;width:600px;height:14px"><span class="tl" style="left:2px;top:2.24px;transform:scaleX(0.972)">Queen_Elizabeth</span></div>
<div class="tc" style="left:974px;top:1429px;width:64px;height:14px"><span class="tcn" style="top:2.24px;transform:scaleX(0.93)">E.531</span></div>
<div class="tc" style="left:1039px;top:1429px;width:121px;height:14px"><span class="tcn" style="top:2.24px;transform:scaleX(1.0)">Halifax</span></div>
<div class="tc" style="left:1161px;top:1429px;width:78px;height:14px"><span class="tcn" style="top:2.24px;transform:scaleX(0.95)">30-10-42</span></div>
<div class="tc" style="left:1240px;top:1429px;width:900px;height:14px"><span class="tl u" style="left:2px;top:2.24px;transform:scaleX(1.042)">https://heritage.canadiana.ca/view/oocihm.lac_reel_c5619/3?r=0&amp;s=3</span></div>
<div class="tc" style="left:1741px;top:1429px;width:900px;height:14px"><span class="tl u" style="left:2px;top:2.24px;transform:scaleX(1.035)">http://ssmaritime.com/RMS-Queen-Elizabeth-War-dep-ClydetoNYC-Feb-40.jpg</span></div>
<div class="tc" style="left:749px;top:1444px;width:52px;height:14px"><span class="tcn" style="top:1.24px;transform:scaleX(0.93)">1014</span></div>
<div class="tc" style="left:802px;top:1444px;width:600px;height:14px"><span class="tl" style="left:2px;top:1.24px;transform:scaleX(0.972)">Baynao</span></div>
<div class="tc" style="left:974px;top:1444px;width:64px;height:14px"><span class="tcn" style="top:1.24px;transform:scaleX(0.93)">E.552</span></div>
<div class="tc" style="left:1039px;top:1444px;width:121px;height:14px"><span class="tcn" style="top:1.24px;transform:scaleX(1.0)">Halifax</span></div>
<div class="tc" style="left:1161px;top:1444px;width:78px;height:14px"><span class="tcn" style="top:1.24px;transform:scaleX(0.95)">5-11-42</span></div>
<div class="tc" style="left:1240px;top:1444px;width:900px;height:14px"><span class="tl u" style="left:2px;top:1.24px;transform:scaleX(1.042)">https://heritage.canadiana.ca/view/oocihm.lac_reel_c5619/1014?r=0&amp;s=1</span></div>
<div class="tc" style="left:1741px;top:1444px;width:900px;height:14px"><span class="tl u" style="left:2px;top:1.24px;transform:scaleX(1.008)">https://www.naval-history.net/PhotoWW1-08amcBayanoPS.JPG</span></div>
<div class="tc" style="left:749px;top:1459px;width:52px;height:14px"><span class="tcn" style="top:1.24px;transform:scaleX(0.93)">1076</span></div>
<div class="tc" style="left:802px;top:1459px;width:600px;height:14px"><span class="tl" style="left:2px;top:1.24px;transform:scaleX(0.972)">Cavina</span></div>
<div class="tc" style="left:974px;top:1459px;width:64px;height:14px"><span class="tcn" style="top:1.24px;transform:scaleX(0.93)">E.553</span></div>
<div class="tc" style="left:1039px;top:1459px;width:121px;height:14px"><span class="tcn" style="top:1.24px;transform:scaleX(1.0)">Halifax</span></div>
<div class="tc" style="left:1161px;top:1459px;width:78px;height:14px"><span class="tcn" style="top:1.24px;transform:scaleX(0.95)">21-11-42</span></div>
<div class="tc" style="left:1240px;top:1459px;width:900px;height:14px"><span class="tl u" style="left:2px;top:1.24px;transform:scaleX(1.042)">https://heritage.canadiana.ca/view/oocihm.lac_reel_c5619/1076?r=0&amp;s=1</span></div>
<div style="position:absolute;left:79px;top:733px;width:1px;height:511px;background:#3a3a3a"></div>
<div style="position:absolute;left:748px;top:733px;width:1px;height:511px;background:#3a3a3a"></div>
<div style="position:absolute;left:748px;top:1227px;width:1700px;height:1px;background:#3a3a3a"></div>
<div class="red" style="top:176.0px"></div>
<div class="red" style="top:401.1px"></div>
<div class="red" style="top:731.5px"></div>
<div class="red" style="top:1244.2px"></div>
<div class="red" style="top:1427.3px"></div>
</div>
<div id="colhdr"></div>
<div class="hdiv" style="left:129px"></div>
<div class="hdiv" style="left:340px"></div>
<div class="hdiv" style="left:748px"></div>
<div class="hdiv" style="left:801px"></div>
<div class="hdiv" style="left:973px"></div>
<div class="hdiv" style="left:1038px"></div>
<div class="hdiv" style="left:1160px"></div>
<div class="hdiv" style="left:1239px"></div>
<div class="hdiv" style="left:1740px"></div>
<div class="hdiv" style="left:2316px"></div>
<div id="ehi"></div>
<div class="hl" style="left:74.0px;">A</div>
<div class="hl" style="left:204.5px;">B</div>
<div class="hl" style="left:514.0px;">C</div>
<div class="hl" style="left:744.5px;">D</div>
<div class="hl" style="left:857.0px;color:#3f5682;">E</div>
<div class="hl" style="left:975.5px;">F</div>
<div class="hl" style="left:1069.0px;">G</div>
<div class="hl" style="left:1169.5px;">H</div>
<div class="hl" style="left:1459.5px;">I</div>
<div class="hl" style="left:1998.0px;">J</div>
<div class="hl" style="left:2324.0px;">K</div>
<div id="rowhdr">
<div class="rh" style="top:0px;height:12px"><div class="rc"><span style="top:-10.5px">149</span></div></div>
<div class="rh" style="top:12px;height:15px"><div class="rc"><span style="top:-7.5px">150</span></div></div>
<div class="rh sel" style="top:27px;height:15px"><div class="rc"><span style="top:-8.5px">151</span></div></div>
<div class="rh" style="top:42px;height:15px"><div class="rc"><span style="top:-7.5px">152</span></div></div>
<div class="rh" style="top:57px;height:15px"><div class="rc"><span style="top:-7.5px">153</span></div></div>
<div class="rh" style="top:72px;height:15px"><div class="rc"><span style="top:-7.5px">154</span></div></div>
<div class="rh" style="top:87px;height:15px"><div class="rc"><span style="top:-7.5px">155</span></div></div>
<div class="rh" style="top:102px;height:15px"><div class="rc"><span style="top:-7.5px">156</span></div></div>
<div class="rh" style="top:117px;height:15px"><div class="rc"><span style="top:-7.5px">157</span></div></div>
<div class="rh" style="top:132px;height:15px"><div class="rc"><span style="top:-7.5px">158</span></div></div>
<div class="rh" style="top:147px;height:15px"><div class="rc"><span style="top:-7.5px">159</span></div></div>
<div class="rh" style="top:162px;height:15px"><div class="rc"><span style="top:-7.5px">160</span></div></div>
<div class="rh" style="top:177px;height:15px"><div class="rc"><span style="top:-7.5px">161</span></div></div>
<div class="rh" style="top:192px;height:15px"><div class="rc"><span style="top:-7.5px">162</span></div></div>
<div class="rh" style="top:207px;height:15px"><div class="rc"><span style="top:-7.5px">163</span></div></div>
<div class="rh" style="top:222px;height:15px"><div class="rc"><span style="top:-7.5px">164</span></div></div>
<div class="rh" style="top:237px;height:15px"><div class="rc"><span style="top:-7.5px">165</span></div></div>
<div class="rh" style="top:252px;height:15px"><div class="rc"><span style="top:-7.5px">166</span></div></div>
<div class="rh" style="top:267px;height:15px"><div class="rc"><span style="top:-7.5px">167</span></div></div>
<div class="rh" style="top:282px;height:15px"><div class="rc"><span style="top:-7.5px">168</span></div></div>
<div class="rh" style="top:297px;height:15px"><div class="rc"><span style="top:-7.5px">169</span></div></div>
<div class="rh" style="top:312px;height:15px"><div class="rc"><span style="top:-7.5px">170</span></div></div>
<div class="rh" style="top:327px;height:15px"><div class="rc"><span style="top:-7.5px">171</span></div></div>
<div class="rh" style="top:342px;height:15px"><div class="rc"><span style="top:-7.5px">172</span></div></div>
<div class="rh" style="top:357px;height:15px"><div class="rc"><span style="top:-7.5px">173</span></div></div>
<div class="rh" style="top:372px;height:15px"><div class="rc"><span style="top:-7.5px">174</span></div></div>
<div class="rh" style="top:387px;height:15px"><div class="rc"><span style="top:-7.5px">175</span></div></div>
<div class="rh" style="top:402px;height:15px"><div class="rc"><span style="top:-7.5px">176</span></div></div>
<div class="rh" style="top:417px;height:15px"><div class="rc"><span style="top:-7.5px">177</span></div></div>
<div class="rh" style="top:432px;height:15px"><div class="rc"><span style="top:-7.5px">178</span></div></div>
<div class="rh" style="top:447px;height:15px"><div class="rc"><span style="top:-7.5px">179</span></div></div>
<div class="rh" style="top:462px;height:15px"><div class="rc"><span style="top:-7.5px">180</span></div></div>
<div class="rh" style="top:477px;height:15px"><div class="rc"><span style="top:-7.5px">181</span></div></div>
<div class="rh" style="top:492px;height:15px"><div class="rc"><span style="top:-7.5px">182</span></div></div>
<div class="rh" style="top:507px;height:18px"><div class="rc"><span style="top:-4.5px">183</span></div></div>
<div class="rh" style="top:525px;height:17px"><div class="rc"><span style="top:-5.5px">184</span></div></div>
<div class="rh" style="top:542px;height:17px"><div class="rc"><span style="top:-5.5px">185</span></div></div>
<div class="rh" style="top:559px;height:17px"><div class="rc"><span style="top:-5.5px">186</span></div></div>
<div class="rh" style="top:576px;height:17px"><div class="rc"><span style="top:-5.5px">187</span></div></div>
<div class="rh" style="top:593px;height:17px"><div class="rc"><span style="top:-5.5px">188</span></div></div>
<div class="rh" style="top:610px;height:17px"><div class="rc"><span style="top:-5.5px">189</span></div></div>
<div class="rh" style="top:627px;height:17px"><div class="rc"><span style="top:-5.5px">190</span></div></div>
<div class="rh" style="top:644px;height:17px"><div class="rc"><span style="top:-5.5px">191</span></div></div>
<div class="rh" style="top:661px;height:17px"><div class="rc"><span style="top:-5.5px">192</span></div></div>
<div class="rh" style="top:678px;height:17px"><div class="rc"><span style="top:-5.5px">193</span></div></div>
<div class="rh" style="top:695px;height:17px"><div class="rc"><span style="top:-5.5px">194</span></div></div>
<div class="rh" style="top:712px;height:17px"><div class="rc"><span style="top:-5.5px">195</span></div></div>
<div class="rh" style="top:729px;height:17px"><div class="rc"><span style="top:-5.5px">196</span></div></div>
<div class="rh" style="top:746px;height:17px"><div class="rc"><span style="top:-5.5px">197</span></div></div>
<div class="rh" style="top:763px;height:17px"><div class="rc"><span style="top:-5.5px">198</span></div></div>
<div class="rh" style="top:780px;height:17px"><div class="rc"><span style="top:-5.5px">199</span></div></div>
<div class="rh" style="top:797px;height:17px"><div class="rc"><span style="top:-5.5px">200</span></div></div>
<div class="rh" style="top:814px;height:17px"><div class="rc"><span style="top:-5.5px">201</span></div></div>
<div class="rh" style="top:831px;height:17px"><div class="rc"><span style="top:-5.5px">202</span></div></div>
<div class="rh" style="top:848px;height:17px"><div class="rc"><span style="top:-5.5px">203</span></div></div>
<div class="rh" style="top:865px;height:17px"><div class="rc"><span style="top:-5.5px">204</span></div></div>
<div class="rh" style="top:882px;height:17px"><div class="rc"><span style="top:-5.5px">205</span></div></div>
<div class="rh" style="top:899px;height:17px"><div class="rc"><span style="top:-5.5px">206</span></div></div>
<div class="rh" style="top:916px;height:17px"><div class="rc"><span style="top:-5.5px">207</span></div></div>
<div class="rh" style="top:933px;height:17px"><div class="rc"><span style="top:-5.5px">208</span></div></div>
<div class="rh" style="top:950px;height:17px"><div class="rc"><span style="top:-5.5px">209</span></div></div>
<div class="rh" style="top:967px;height:17px"><div class="rc"><span style="top:-5.5px">210</span></div></div>
<div class="rh" style="top:984px;height:17px"><div class="rc"><span style="top:-5.5px">211</span></div></div>
<div class="rh" style="top:1001px;height:19px"><div class="rc"><span style="top:-3.5px">212</span></div></div>
<div class="rh" style="top:1020px;height:15px"><div class="rc"><span style="top:-7.5px">213</span></div></div>
<div class="rh" style="top:1035px;height:15px"><div class="rc"><span style="top:-7.5px">214</span></div></div>
<div class="rh" style="top:1050px;height:15px"><div class="rc"><span style="top:-7.5px">215</span></div></div>
<div class="rh" style="top:1065px;height:17px"><div class="rc"><span style="top:-5.5px">216</span></div></div>
<div class="rh" style="top:1082px;height:17px"><div class="rc"><span style="top:-5.5px">217</span></div></div>
<div class="rh" style="top:1099px;height:17px"><div class="rc"><span style="top:-5.5px">218</span></div></div>
<div class="rh" style="top:1116px;height:17px"><div class="rc"><span style="top:-5.5px">219</span></div></div>
<div class="rh" style="top:1133px;height:17px"><div class="rc"><span style="top:-5.5px">220</span></div></div>
<div class="rh" style="top:1150px;height:17px"><div class="rc"><span style="top:-5.5px">221</span></div></div>
<div class="rh" style="top:1167px;height:17px"><div class="rc"><span style="top:-5.5px">222</span></div></div>
<div class="rh" style="top:1184px;height:18px"><div class="rc"><span style="top:-4.5px">223</span></div></div>
<div class="rh" style="top:1202px;height:15px"><div class="rc"><span style="top:-7.5px">224</span></div></div>
<div class="rh" style="top:1217px;height:15px"><div class="rc"><span style="top:-7.5px">225</span></div></div>
<div class="rh" style="top:1232px;height:15px"><div class="rc"><span style="top:-7.5px">226</span></div></div>
</div>
<div id="selall"><div></div></div>
<div id="toolbar">
<div id="sp">Spreadsheets</div>
<div id="title">Directorate of Movements</div>
<svg id="icons" width="2388" height="92" viewBox="0 0 2388 92" style="position:absolute;left:0;top:0">
<g fill="none" stroke="#4aa55b" stroke-width="3" stroke-linecap="round" stroke-linejoin="round">
<circle cx="334.4" cy="42.25" r="20.05" stroke-width="2.8"/>
<path d="M331.2 31.6 L324.8 37.9 L331.2 44.3 M324.8 37.9 H338.2 A6.9 6.9 0 0 1 338.2 51.7 H333.2" stroke-width="2.6"/>
<circle cx="1880.5" cy="42.4" r="19.9"/>
<path d="M1869 36.4 H1893 M1872 43.5 H1890 M1875 50.7 H1887"/>
<path d="M1989.4 25.5 V59.5 M1972.4 42.5 H2006.4"/>
<circle cx="2213.5" cy="42.2" r="19.9"/>
<path d="M2305.5 52 V24 Q2305.5 19.5 2310 19.5 H2334 Q2338.5 19.5 2338.5 24 V50"/>
<path d="M2305.5 52 V58 Q2305.5 62.2 2310 62.2 H2316"/>
<path d="M2313 28.4 H2331 M2313 36 H2331 M2313 43.5 H2321.5" stroke-width="2.6"/>
</g>
<g fill="#4aa55b">
<circle cx="2203.9" cy="42.2" r="3.1"/><circle cx="2213.5" cy="42.2" r="3.1"/><circle cx="2223.4" cy="42.2" r="3.1"/>
</g>
<g>
<path d="M2315.9 59 C2319.8 47.3 2340 47.3 2343.9 59 C2340 70.7 2319.8 70.7 2315.9 59 Z" fill="#4aa55b" stroke="#fff" stroke-width="2.6"/>
<circle cx="2329.8" cy="59" r="6" fill="#fff"/>
<circle cx="2329.8" cy="59" r="2.1" fill="#4aa55b"/>
</g>
<g>
<path d="M2081.6 39.8 A20.2 20.2 0 1 1 2094 61" fill="none" stroke="#4aa55b" stroke-width="2.9"/>
<ellipse cx="2101.6" cy="37.6" rx="7.3" ry="7.9" fill="#4aa55b"/>
<path d="M2096.2 50.6 Q2096.4 49.3 2101.8 49.2 Q2110.5 49.2 2116.6 55 A21.2 21.2 0 0 1 2092.8 61.5 Q2096.2 58 2096.2 50.6 Z" fill="#4aa55b"/>
<circle cx="2082.5" cy="53.4" r="12.3" fill="#fff"/>
<circle cx="2082.5" cy="53.4" r="10.6" fill="#4aa55b"/>
<path d="M2082.5 47 V59.8 M2076.1 53.4 H2088.9" stroke="#fff" stroke-width="2.6" stroke-linecap="round"/>
</g>
<g transform="translate(1768.35 44.35) rotate(45)">
<g fill="none" stroke="#4aa55b" stroke-width="2.9" stroke-linejoin="round" stroke-linecap="round">
<path d="M-12.6 -3 Q-13.2 -9 -17.2 -17.6 Q-17.6 -18.5 -16.6 -18.5 L9.6 -18.6 Q10.8 -18.6 10.8 -17.4 L11.3 -3"/>
<rect x="-13.7" y="-3" width="27.4" height="8.8" rx="2"/>
<path d="M-3 5.8 L-3.8 12 Q-8.8 17 -7.8 24.5 Q-6.5 29.8 0 29.8 Q6.5 29.8 7.8 24.5 Q8.8 17 3.8 12 L3 5.8"/>
</g>
<circle cx="0" cy="22.3" r="2.3" fill="#4aa55b"/>
<path d="M2.6 -18.4 Q2.4 -11 1.2 -7.2 Q5.8 -10.5 8.8 -18.4 Z" fill="#4aa55b"/>
</g>
</svg>
</div>
<div id="tabbar">
<div class="tab" style="left:0;width:90px;background:#f2f2f2"></div>
<svg style="position:absolute;left:0;top:0" width="90" height="71"><path d="M44.5 18.2 V51.2 M27.8 34.5 H61.2" stroke="#808085" stroke-width="2.5" stroke-linecap="round"/></svg>
<div class="tab" style="left:90px;width:279px;background:#f9f9f9"><span style="color:#808080;transform:scaleX(1.0060)">War Diaries</span></div>
<div class="tab" style="left:369px;width:280px;background:#f9f9f9"><span style="color:#808080;transform:scaleX(1.0370)">Kardex System</span></div>
<div class="tab" style="left:649px;width:436px;background:#4aa55b"><span style="color:#ffffff;transform:scaleX(1.0560)">Directorate of Movements</span></div>
<div class="tab" style="left:1085px;width:520px;background:#f9f9f9"><span style="color:#808080;transform:scaleX(1.0040)">Royal Canadia...Personnel Files</span></div>
<div style="position:absolute;left:90px;top:0;width:1px;height:71px;background:#c4c4c4"></div>
<div style="position:absolute;left:369px;top:0;width:1px;height:71px;background:#999999"></div>
<div style="position:absolute;left:649px;top:0;width:1px;height:71px;background:#5b8a62"></div>
<div style="position:absolute;left:1085px;top:0;width:1px;height:71px;background:#5b8a62"></div>
<div style="position:absolute;left:1605px;top:0;width:1px;height:71px;background:#aaaaaa"></div>
</div>
<div id="selbox"></div>
<div class="handle" style="left:787.3px;top:237.4px"></div>
<div class="handle" style="left:970.3px;top:267.2px"></div>
</body></html>
